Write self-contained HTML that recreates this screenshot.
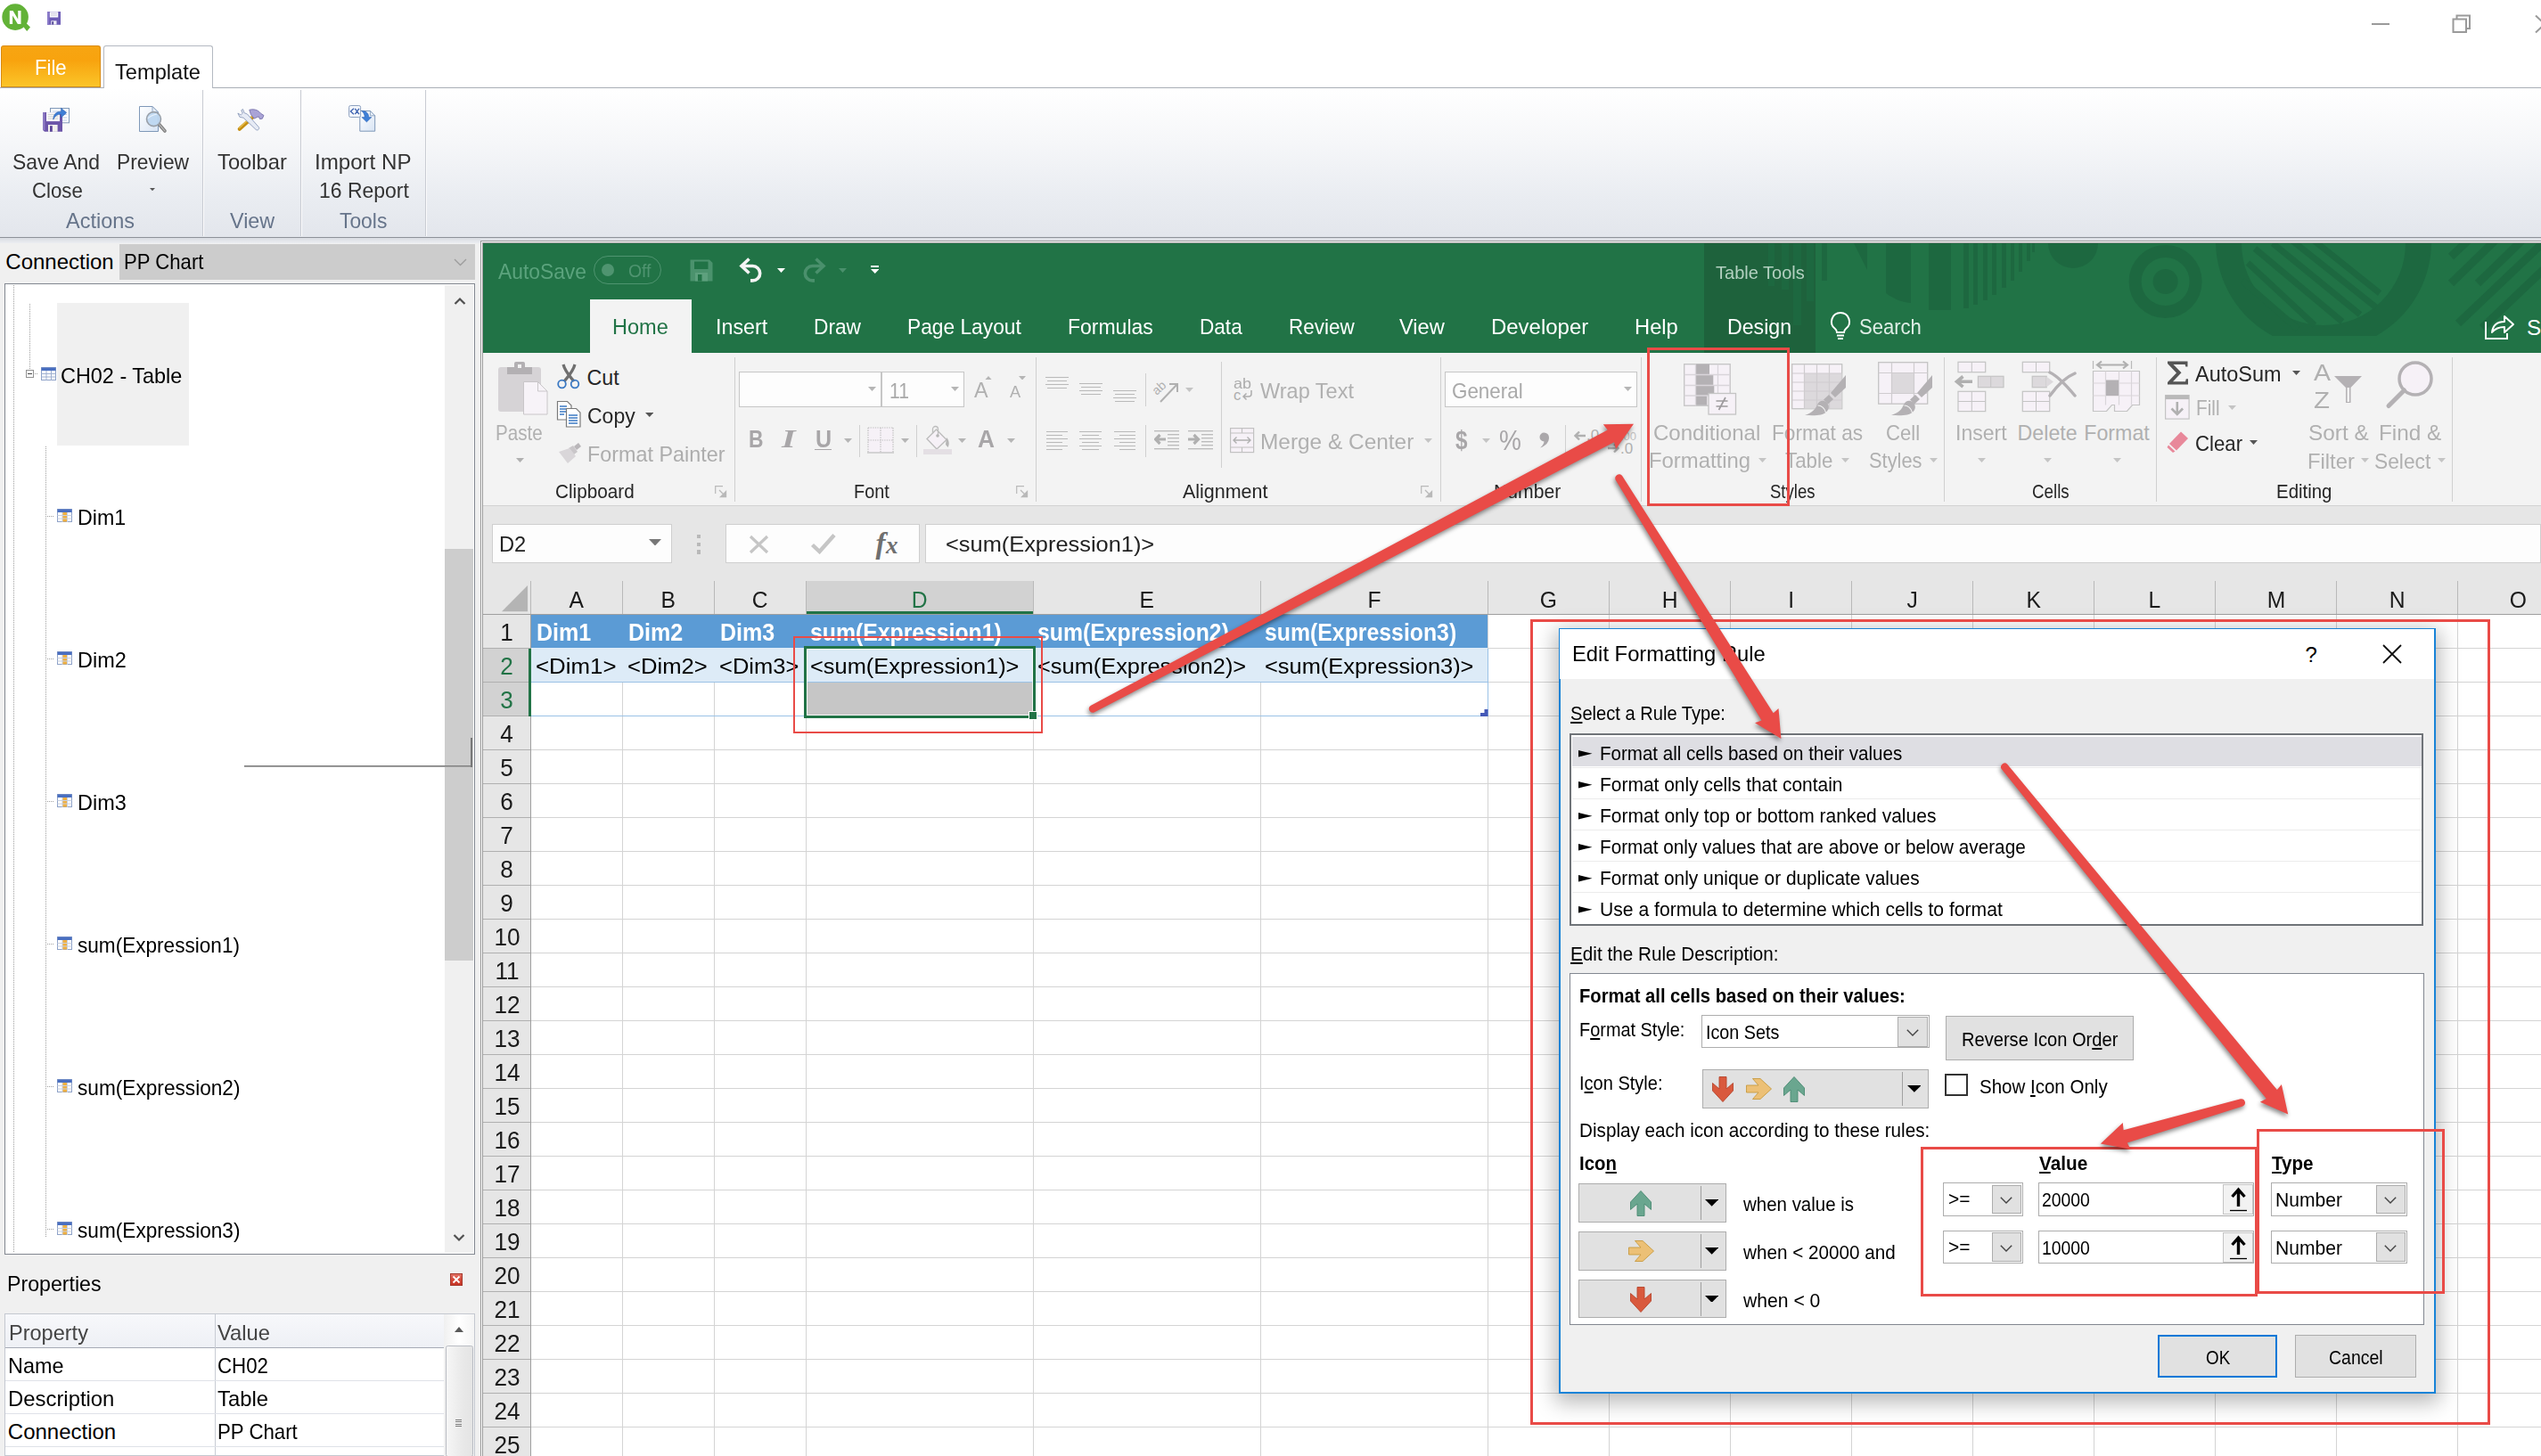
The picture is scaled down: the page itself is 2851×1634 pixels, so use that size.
<!DOCTYPE html>
<html><head><meta charset="utf-8"><title>NPrinting Template Editor</title>
<style>
html,body{margin:0;padding:0;background:#fff;}
body{width:2851px;height:1634px;overflow:hidden;position:relative;font-family:"Liberation Sans",sans-serif;}
#root{position:absolute;left:0;top:0;width:2851px;height:1634px;overflow:hidden;}
#root div,#root svg,#root span.t{position:absolute;box-sizing:border-box;}
span.t{white-space:pre;transform-origin:0 50%;display:block;}
u{text-decoration:underline;text-underline-offset:2px;text-decoration-thickness:1.5px;}
</style></head><body><div id="root">
<div style="left:0.0px;top:0.0px;width:2851.0px;height:98.0px;background:#fff;"></div>
<svg style="left:0.0px;top:0.0px;" width="40.0" height="40.0" viewBox="0 0 40 40"><circle cx="17.100" cy="19.100" r="14.800" fill="#62b237"/><path d="M25.200 28.800l3.600-3.600 5.200 5.300-3.800 4.600z" fill="#62b237"/>
<path d="M10.800 27V12.100h3.700l5.700 9.300v-9.300h3.300V27h-3.600l-5.800-9.500V27z" fill="#fff"/></svg>
<svg style="left:52.0px;top:12.0px;" width="18.0" height="18.0" viewBox="0 0 18 18"><rect x="1" y="1" width="15" height="14.800" fill="#6d5cb6"/><rect x="1" y="1" width="2.200" height="14.800" fill="#8a7bc9"/><rect x="3.800" y="1.300" width="9.400" height="6.200" fill="#fbfbfe"/><path d="M5 3.300h7M5 5.200h7" stroke="#b9b5cf" stroke-width=".7"/><rect x="5.300" y="11.300" width="6.200" height="4.300" fill="#eeeef6"/><rect x="6.300" y="12.200" width="1.800" height="3.400" fill="#4c3f91"/></svg>
<div style="left:2661.0px;top:26.0px;width:20.0px;height:2.2px;background:#9a9a9a;"></div>
<svg style="left:2750.0px;top:15.0px;" width="24.0" height="24.0" viewBox="0 0 24 24"><path d="M6.5 6.5V2.5H21V17H17" fill="none" stroke="#9a9a9a" stroke-width="2"/><rect x="2.5" y="6.5" width="14.5" height="14.5" fill="none" stroke="#9a9a9a" stroke-width="2"/></svg>
<svg style="left:2843.0px;top:15.0px;" width="12.0" height="24.0" viewBox="0 0 12 24"><path d="M2 2.5L22 21.5M2 21.5L22 2.5" stroke="#9a9a9a" stroke-width="2"/></svg>
<div style="left:0.0px;top:97.5px;width:2851.0px;height:1.5px;background:#a9aeb6;"></div>
<div style="left:1.0px;top:51.0px;width:112.0px;height:47.0px;background:linear-gradient(#f7a512 0%,#f8a30e 35%,#fbc529 100%);border:1px solid #d98a10;border-radius:3px 3px 0 0;border-bottom:1px solid #c98a20;"></div>
<span class="t" style="left:39.0px;top:64.30px;font-size:24.00px;line-height:24.00px;color:#fff;transform:scaleX(0.9205);">File</span>
<div style="left:116.0px;top:51.0px;width:122.5px;height:48.0px;background:#fff;border:1.5px solid #b4b9c1;border-radius:3px 3px 0 0;border-bottom:none;"></div>
<span class="t" style="left:129.0px;top:69.30px;font-size:24.00px;line-height:24.00px;color:#111;transform:scaleX(0.9858);">Template</span>
<div style="left:0.0px;top:99.0px;width:2851.0px;height:167.0px;background:linear-gradient(#ffffff 0%,#f6f7f9 35%,#e9ecf1 75%,#e3e6ec 100%);"></div>
<div style="left:0.0px;top:265.5px;width:2851.0px;height:1.5px;background:#8e9299;"></div>
<div style="left:0.0px;top:267.0px;width:2851.0px;height:6.0px;background:linear-gradient(#d9dce2,#eceef2);"></div>
<div style="left:226.5px;top:101.0px;width:1.2px;height:164.0px;background:#c9ccd3;"></div>
<div style="left:227.7px;top:101.0px;width:1.0px;height:164.0px;background:#fbfbfc;"></div>
<div style="left:337.0px;top:101.0px;width:1.2px;height:164.0px;background:#c9ccd3;"></div>
<div style="left:338.2px;top:101.0px;width:1.0px;height:164.0px;background:#fbfbfc;"></div>
<div style="left:476.5px;top:101.0px;width:1.2px;height:164.0px;background:#c9ccd3;"></div>
<div style="left:477.7px;top:101.0px;width:1.0px;height:164.0px;background:#fbfbfc;"></div>
<span class="t" style="left:14.4px;top:170.30px;font-size:24.00px;line-height:24.00px;color:#333;transform:scaleX(0.9547);">Save And</span>
<span class="t" style="left:35.5px;top:202.30px;font-size:24.00px;line-height:24.00px;color:#333;transform:scaleX(0.9257);">Close</span>
<span class="t" style="left:131.0px;top:170.30px;font-size:24.00px;line-height:24.00px;color:#333;transform:scaleX(0.9489);">Preview</span>
<span class="t" style="left:243.7px;top:170.30px;font-size:24.00px;line-height:24.00px;color:#333;transform:scaleX(0.9896);">Toolbar</span>
<span class="t" style="left:353.0px;top:170.30px;font-size:24.00px;line-height:24.00px;color:#333;transform:scaleX(1.0044);">Import NP</span>
<span class="t" style="left:357.7px;top:202.30px;font-size:24.00px;line-height:24.00px;color:#333;transform:scaleX(0.9573);">16 Report</span>
<span class="t" style="left:74.4px;top:236.30px;font-size:24.00px;line-height:24.00px;color:#66748a;transform:scaleX(0.9783);">Actions</span>
<span class="t" style="left:257.6px;top:236.30px;font-size:24.00px;line-height:24.00px;color:#66748a;transform:scaleX(0.9731);">View</span>
<span class="t" style="left:380.7px;top:236.30px;font-size:24.00px;line-height:24.00px;color:#66748a;transform:scaleX(0.9513);">Tools</span>
<svg style="left:168.3px;top:211.2px;" width="6.0" height="3.2" viewBox="0 0 6 3.2"><path d="M0 0H6L3.0 3.2Z" fill="#555"/></svg>
<svg style="left:44.0px;top:116.0px;" width="40.0" height="36.0" viewBox="0 0 40 36"><g transform="translate(-44,-116)">
<rect x="56.500" y="121.500" width="21" height="16.300" fill="#fff" stroke="#7f98b8" stroke-width="1"/><path d="M59 125h16M59 128.500h16M59 132h16M59 135h16" stroke="#b3c6e4" stroke-width=".9"/>
<path d="M48.200 126.100h21.800v21.700h-20l-1.800-1.800z" fill="#6c55a9"/><rect x="48.200" y="126.100" width="2.300" height="20" fill="#8d7bc4"/>
<rect x="52" y="126.100" width="15" height="10" fill="#fafafa"/><path d="M53.500 128.500h12M53.500 130.800h12M53.500 133.100h12" stroke="#c9c9c9" stroke-width=".8"/>
<rect x="54" y="140" width="10.600" height="7.800" fill="#f2f0ee"/><rect x="56" y="141.200" width="2.800" height="6.600" fill="#5a4598"/>
<path d="M59.800 134.200c0-6 3.500-9.200 8.800-9v-3.900l6 5.300-6 5.300v-3.500c-4-.3-6.800 1.500-8.800 5.800z" fill="#3f7fd6" stroke="#2b5fae" stroke-width=".6"/></g></svg>
<svg style="left:154.0px;top:117.0px;" width="36.0" height="34.0" viewBox="0 0 36 34"><g transform="translate(-154,-117)"><defs><linearGradient id="pg" x1="0" y1="0" x2="1" y2="1"><stop offset="0" stop-color="#fff"/><stop offset="1" stop-color="#d8e4f4"/></linearGradient></defs>
<path d="M156.500 119.500h14.500l6.500 6.500v21.500h-21z" fill="url(#pg)" stroke="#7f98b8" stroke-width="1"/><path d="M171 119.500v6.500h6.500z" fill="#e9f0fa" stroke="#7f98b8" stroke-width=".8"/>
<path d="M178.500 139.500l6.500 7.500" stroke="#7b7b7b" stroke-width="3.600" stroke-linecap="round"/><path d="M179 140l6 7" stroke="#b9b9b9" stroke-width="1.200" stroke-linecap="round"/>
<circle cx="172.500" cy="133.600" r="8" fill="#bcd6f0" fill-opacity=".92" stroke="#9aa0a8" stroke-width="1.600"/><path d="M166 133c2-3 6-4 10-5" stroke="#e8f2fc" stroke-width="1.200" fill="none"/></g></svg>
<svg style="left:262.0px;top:118.0px;" width="38.0" height="32.0" viewBox="0 0 38 32"><g transform="translate(-262,-118)">
<path d="M268.800 144.800L283.500 131.500" stroke="#c58f13" stroke-width="4.200" stroke-linecap="round"/><path d="M268.500 143.500L283 130.500" stroke="#e8bd4b" stroke-width="1.300" stroke-linecap="round"/>
<path d="M279.800 123.300c4.500-1.300 9.500-.3 12.800 4l3.400 2.200-1.700 3.700-2.800.4-1.300-2.800-5.200 2.300-3.600-4.800z" fill="#a9a3d6" stroke="#6f69a6" stroke-width=".8"/>
<path d="M272.500 122.500l1.600 4.200 3.300 1.300 12.800 14.500c1.600 2-1 4.600-3 3l-14-13.300-4.300-.9-2-4.300 3.300 2.100 2.100-2-1.600-3.300z" fill="#e6ebf5" stroke="#8c9bba" stroke-width=".9"/></g></svg>
<svg style="left:389.0px;top:116.0px;" width="36.0" height="36.0" viewBox="0 0 36 36"><g transform="translate(-389,-116)">
<path d="M403.800 124.500h11.600l5.300 5.300v17.400h-16.900z" fill="url(#pg)" stroke="#7f98b8" stroke-width="1"/><path d="M415.400 124.500v5.300h5.300z" fill="#e9f0fa" stroke="#7f98b8" stroke-width=".8"/>
<rect x="391.600" y="118.500" width="13" height="13" rx="1.800" fill="#f3f6fb" stroke="#8ea2c0" stroke-width="1"/>
<path d="M397 121.800l-3.600 3.200 3.600 3.200M398.300 121.800l4.600 6.400M402.900 121.800l-4.600 6.400" fill="none" stroke="#3d62b0" stroke-width="1.300"/>
<path d="M405.500 124.300c5.200 0 8.300 2.700 8.300 7.300h3.100l-5.500 5.300-5.500-5.300h3.200c0-3.200-1.200-5.300-3.600-7.300z" fill="#3f7fd6" stroke="#2b5fae" stroke-width=".5"/></g></svg>
<div style="left:0.0px;top:273.0px;width:541.0px;height:1361.0px;background:#f0f0f0;"></div>
<span class="t" style="left:6.3px;top:282.30px;font-size:24.00px;line-height:24.00px;color:#000;">Connection</span>
<div style="left:134.0px;top:274.0px;width:399.0px;height:40.0px;background:#cccccc;"></div>
<span class="t" style="left:138.5px;top:282.30px;font-size:24.00px;line-height:24.00px;color:#000;transform:scaleX(0.9222);">PP Chart</span>
<svg style="left:509.0px;top:290.0px;" width="16.0" height="10.0" viewBox="0 0 16 10"><path d="M1 1L7.500 7.500L14 1" fill="none" stroke="#9c9c9c" stroke-width="1.300"/></svg>
<div style="left:5.0px;top:318.0px;width:528.2px;height:1089.5px;background:#fff;border:1.5px solid #828790;"></div>
<div style="left:499.0px;top:320.0px;width:32.0px;height:1086.0px;background:#f0f0f0;"></div>
<div style="left:499.0px;top:616.0px;width:32.0px;height:462.0px;background:#cdcdcd;"></div>
<svg style="left:508.5px;top:333.0px;" width="14.0" height="10.0" viewBox="0 0 14 10"><path d="M1.5 8L7 2.5L12.5 8" fill="none" stroke="#505050" stroke-width="2.2"/></svg>
<svg style="left:508.0px;top:1384.0px;" width="14.0" height="10.0" viewBox="0 0 14 10"><path d="M1.5 2L7 7.5L12.5 2" fill="none" stroke="#505050" stroke-width="2.2"/></svg>
<div style="left:15.0px;top:320.0px;width:1.0px;height:1086.0px;background:repeating-linear-gradient(to bottom,#a0a0a0 0 1px,transparent 1px 2px);"></div>
<div style="left:33.0px;top:341.0px;width:1.0px;height:80.0px;background:repeating-linear-gradient(to bottom,#a0a0a0 0 1px,transparent 1px 2px);"></div>
<div style="left:51.0px;top:501.0px;width:1.0px;height:888.0px;background:repeating-linear-gradient(to bottom,#a0a0a0 0 1px,transparent 1px 2px);"></div>
<div style="left:64.0px;top:340.0px;width:148.0px;height:160.0px;background:#f0f0f0;"></div>
<div style="left:29.0px;top:415.0px;width:9.0px;height:9.0px;background:#fff;border:1px solid #919191;"></div>
<div style="left:31.0px;top:419.0px;width:5.0px;height:1.0px;background:#444;"></div>
<div style="left:39.0px;top:419.0px;width:4.0px;height:1.0px;background:repeating-linear-gradient(to right,#a0a0a0 0 1px,transparent 1px 2px);"></div>
<svg style="left:46.0px;top:412.0px;" width="17.0" height="15.0" viewBox="0 0 17 15"><rect x=".5" y=".5" width="16" height="14" fill="#fff" stroke="#8ea2c8"/><rect x=".5" y=".5" width="16" height="3.5" fill="#4a6fc0"/><path d="M.5 7.5h16M.5 11h16M6 4v11M11.5 4v11" stroke="#9fb0d0" stroke-width="1"/></svg>
<span class="t" style="left:68.3px;top:410.30px;font-size:24.00px;line-height:24.00px;color:#000;transform:scaleX(0.9761);">CH02 - Table</span>
<div style="left:53.0px;top:579.4px;width:8.0px;height:1.0px;background:repeating-linear-gradient(to right,#a0a0a0 0 1px,transparent 1px 2px);"></div>
<svg style="left:64.0px;top:571.4px;" width="17.0" height="15.0" viewBox="0 0 17 15"><rect x=".5" y=".5" width="16" height="14" fill="#fff" stroke="#8ea2c8"/><rect x=".5" y=".5" width="16" height="3.5" fill="#4a6fc0"/><rect x="6" y="4" width="5.5" height="10.5" fill="#f0b040"/><path d="M.5 7.5h16M.5 11h16M6 4v11M11.5 4v11" stroke="#c8d0e0" stroke-width="1"/></svg>
<span class="t" style="left:87.0px;top:569.30px;font-size:24.00px;line-height:24.00px;color:#000;transform:scaleX(0.9677);">Dim1</span>
<div style="left:53.0px;top:739.4px;width:8.0px;height:1.0px;background:repeating-linear-gradient(to right,#a0a0a0 0 1px,transparent 1px 2px);"></div>
<svg style="left:64.0px;top:731.4px;" width="17.0" height="15.0" viewBox="0 0 17 15"><rect x=".5" y=".5" width="16" height="14" fill="#fff" stroke="#8ea2c8"/><rect x=".5" y=".5" width="16" height="3.5" fill="#4a6fc0"/><rect x="6" y="4" width="5.5" height="10.5" fill="#f0b040"/><path d="M.5 7.5h16M.5 11h16M6 4v11M11.5 4v11" stroke="#c8d0e0" stroke-width="1"/></svg>
<span class="t" style="left:87.0px;top:729.30px;font-size:24.00px;line-height:24.00px;color:#000;transform:scaleX(0.9785);">Dim2</span>
<div style="left:53.0px;top:899.4px;width:8.0px;height:1.0px;background:repeating-linear-gradient(to right,#a0a0a0 0 1px,transparent 1px 2px);"></div>
<svg style="left:64.0px;top:891.4px;" width="17.0" height="15.0" viewBox="0 0 17 15"><rect x=".5" y=".5" width="16" height="14" fill="#fff" stroke="#8ea2c8"/><rect x=".5" y=".5" width="16" height="3.5" fill="#4a6fc0"/><rect x="6" y="4" width="5.5" height="10.5" fill="#f0b040"/><path d="M.5 7.5h16M.5 11h16M6 4v11M11.5 4v11" stroke="#c8d0e0" stroke-width="1"/></svg>
<span class="t" style="left:87.0px;top:889.30px;font-size:24.00px;line-height:24.00px;color:#000;transform:scaleX(0.9785);">Dim3</span>
<div style="left:53.0px;top:1059.4px;width:8.0px;height:1.0px;background:repeating-linear-gradient(to right,#a0a0a0 0 1px,transparent 1px 2px);"></div>
<svg style="left:64.0px;top:1051.4px;" width="17.0" height="15.0" viewBox="0 0 17 15"><rect x=".5" y=".5" width="16" height="14" fill="#fff" stroke="#8ea2c8"/><rect x=".5" y=".5" width="16" height="3.5" fill="#4a6fc0"/><rect x="6" y="4" width="5.5" height="10.5" fill="#f0b040"/><path d="M.5 7.5h16M.5 11h16M6 4v11M11.5 4v11" stroke="#c8d0e0" stroke-width="1"/></svg>
<span class="t" style="left:87.0px;top:1049.30px;font-size:24.00px;line-height:24.00px;color:#000;transform:scaleX(0.9410);">sum(Expression1)</span>
<div style="left:53.0px;top:1219.4px;width:8.0px;height:1.0px;background:repeating-linear-gradient(to right,#a0a0a0 0 1px,transparent 1px 2px);"></div>
<svg style="left:64.0px;top:1211.4px;" width="17.0" height="15.0" viewBox="0 0 17 15"><rect x=".5" y=".5" width="16" height="14" fill="#fff" stroke="#8ea2c8"/><rect x=".5" y=".5" width="16" height="3.5" fill="#4a6fc0"/><rect x="6" y="4" width="5.5" height="10.5" fill="#f0b040"/><path d="M.5 7.5h16M.5 11h16M6 4v11M11.5 4v11" stroke="#c8d0e0" stroke-width="1"/></svg>
<span class="t" style="left:87.0px;top:1209.30px;font-size:24.00px;line-height:24.00px;color:#000;transform:scaleX(0.9436);">sum(Expression2)</span>
<div style="left:53.0px;top:1379.4px;width:8.0px;height:1.0px;background:repeating-linear-gradient(to right,#a0a0a0 0 1px,transparent 1px 2px);"></div>
<svg style="left:64.0px;top:1371.4px;" width="17.0" height="15.0" viewBox="0 0 17 15"><rect x=".5" y=".5" width="16" height="14" fill="#fff" stroke="#8ea2c8"/><rect x=".5" y=".5" width="16" height="3.5" fill="#4a6fc0"/><rect x="6" y="4" width="5.5" height="10.5" fill="#f0b040"/><path d="M.5 7.5h16M.5 11h16M6 4v11M11.5 4v11" stroke="#c8d0e0" stroke-width="1"/></svg>
<span class="t" style="left:87.0px;top:1369.30px;font-size:24.00px;line-height:24.00px;color:#000;transform:scaleX(0.9436);">sum(Expression3)</span>
<div style="left:274.0px;top:859.0px;width:255.0px;height:2.0px;background:linear-gradient(#6e6e6e,#b8b8b8);"></div>
<div style="left:528.0px;top:828.0px;width:1.5px;height:33.0px;background:#777;"></div>
<span class="t" style="left:7.5px;top:1429.30px;font-size:24.00px;line-height:24.00px;color:#000;transform:scaleX(0.9645);">Properties</span>
<svg style="left:505.0px;top:1429.0px;" width="14.0" height="14.0" viewBox="0 0 14 14"><defs><linearGradient id="rx" x1="0" y1="0" x2="0" y2="1"><stop offset="0" stop-color="#e4776a"/><stop offset=".5" stop-color="#d64a3b"/><stop offset="1" stop-color="#c43325"/></linearGradient></defs><rect x=".5" y=".5" width="13" height="13" fill="url(#rx)" stroke="#a5382c"/><path d="M3.5 3.5l7 7M10.5 3.5l-7 7" stroke="#fff" stroke-width="1.8"/></svg>
<div style="left:5.0px;top:1474.0px;width:528.0px;height:160.0px;background:#fff;border:1px solid #c4c8d0;"></div>
<div style="left:6.0px;top:1475.0px;width:492.0px;height:37.0px;background:linear-gradient(#f7f8fb,#eef0f5);"></div>
<div style="left:6.0px;top:1511.5px;width:492.0px;height:1.5px;background:#a6abb5;"></div>
<div style="left:498.0px;top:1475.0px;width:34.0px;height:159.0px;background:linear-gradient(to right,#f0f0f0,#ffffff 50%,#f4f4f4);"></div>
<div style="left:499.5px;top:1509.5px;width:31.0px;height:125.0px;background:linear-gradient(to right,#f6f6f6,#e9e9e9 60%,#e4e4e4);border:1px solid #b9bcc3;border-radius:2.5px;"></div>
<svg style="left:510.0px;top:1489.0px;" width="10.0" height="6.0" viewBox="0 0 10 6"><path d="M0 6L5 0L10 6Z" fill="#5a5a5a"/></svg>
<div style="left:510.8px;top:1593.0px;width:7.4px;height:1.0px;background:#7d7d7d;"></div>
<div style="left:510.8px;top:1595.4px;width:7.4px;height:1.0px;background:#7d7d7d;"></div>
<div style="left:510.8px;top:1597.8px;width:7.4px;height:1.0px;background:#7d7d7d;"></div>
<div style="left:510.8px;top:1600.2px;width:7.4px;height:1.0px;background:#7d7d7d;"></div>
<div style="left:241.0px;top:1475.0px;width:1.0px;height:159.0px;background:#c8ccd4;"></div>
<div style="left:6.0px;top:1549.0px;width:492.0px;height:1.0px;background:#dfe2e8;"></div>
<div style="left:6.0px;top:1586.0px;width:492.0px;height:1.0px;background:#dfe2e8;"></div>
<div style="left:6.0px;top:1623.0px;width:492.0px;height:1.0px;background:#dfe2e8;"></div>
<span class="t" style="left:9.5px;top:1484.30px;font-size:24.00px;line-height:24.00px;color:#444;transform:scaleX(0.9801);">Property</span>
<span class="t" style="left:244.0px;top:1484.30px;font-size:24.00px;line-height:24.00px;color:#444;transform:scaleX(0.9899);">Value</span>
<span class="t" style="left:8.8px;top:1521.30px;font-size:24.00px;line-height:24.00px;color:#000;transform:scaleX(0.9747);">Name</span>
<span class="t" style="left:244.2px;top:1521.30px;font-size:24.00px;line-height:24.00px;color:#000;transform:scaleX(0.9289);">CH02</span>
<span class="t" style="left:8.8px;top:1558.30px;font-size:24.00px;line-height:24.00px;color:#000;transform:scaleX(0.9946);">Description</span>
<span class="t" style="left:244.2px;top:1558.30px;font-size:24.00px;line-height:24.00px;color:#000;transform:scaleX(0.9934);">Table</span>
<span class="t" style="left:8.8px;top:1595.30px;font-size:24.00px;line-height:24.00px;color:#000;">Connection</span>
<span class="t" style="left:244.2px;top:1595.30px;font-size:24.00px;line-height:24.00px;color:#000;transform:scaleX(0.9263);">PP Chart</span>
<div style="left:539.0px;top:270.0px;width:2313.0px;height:1365.0px;background:#fff;border:1px solid #9a9a9a;"></div>
<div style="left:541.0px;top:272.0px;width:2311.0px;height:1363.0px;background:#fff;border:1px solid #9a9a9a;"></div>
<div style="left:542.0px;top:273.0px;width:2309.0px;height:123.0px;background:#217346;"></div>
<div style="left:1912.0px;top:273.0px;width:125.0px;height:123.0px;background:#1e623c;"></div>
<svg style="left:1900.0px;top:273.0px;" width="951.0" height="123.0" viewBox="0 0 951 123"><g fill="#1d6840">
<rect x="84" y="0" width="7" height="48"/><rect x="99" y="0" width="8" height="52"/><rect x="112" y="0" width="9" height="92"/><rect x="127" y="0" width="8" height="65"/>
<rect x="144" y="0" width="6" height="42"/>
<path d="M180 0h15v30z"/>
<path d="M216 0h28v67c-11-1-20-5-28-11z"/>
<rect x="264" y="0" width="25" height="75"/>
<rect x="303" y="0" width="6" height="73"/><rect x="314" y="0" width="5" height="69"/><rect x="325" y="0" width="5" height="64"/><rect x="335" y="0" width="5" height="58"/><rect x="346" y="0" width="5" height="50"/><rect x="356" y="0" width="4" height="42"/><rect x="365" y="0" width="4" height="32"/><rect x="374" y="0" width="4" height="20"/><rect x="380" y="0" width="3" height="10"/>
<path d="M398 0a28 28 0 0 0 56 0z"/>
</g>
<circle cx="529.6" cy="43" r="34" fill="none" stroke="#1d6840" stroke-width="14"/><circle cx="529.6" cy="43" r="14" fill="#1d6840"/>
<path d="M586 0 A121 121 0 0 0 650 104 H766 A121 121 0 0 0 828 0 H799 A92 92 0 0 1 615 0Z" fill="#1d6840"/>
<g stroke="#1d6840" stroke-width="7" fill="none"><path d="M622 22l75 70M616 42l62 54M630 6l98 82M650 0l98 80M668 -6l98 78M690 -8l80 64"/></g>
<g stroke="#1d6840" stroke-width="9" fill="none"><path d="M850 15l40-38M850 45l70-68M880 45l70-68M858 90l100-95M885 95l80-76"/></g>
</svg>
<span class="t" style="left:558.8px;top:294.30px;font-size:23.20px;line-height:23.20px;color:#5ba37d;transform:scaleX(0.9840);">AutoSave</span>
<div style="left:666.4px;top:287.4px;width:75.6px;height:31.2px;border:1.3px solid #4f9470;border-radius:16px;"></div>
<div style="left:675.0px;top:296.3px;width:14.0px;height:14.0px;background:#4f9470;border-radius:50%;"></div>
<span class="t" style="left:704.5px;top:295.30px;font-size:19.50px;line-height:19.50px;color:#4f9470;transform:scaleX(0.9941);">Off</span>
<svg style="left:773.7px;top:291.0px;" width="26.0" height="25.0" viewBox="0 0 26 25"><path d="M.5 .5h21.500l3.500 3.500v20.500H.5z" fill="#4b926d"/><rect x="5" y="2.500" width="15.500" height="8.500" fill="#217346"/><rect x="6" y="15" width="14" height="9.500" fill="#5da07d"/><rect x="9" y="17" width="4.500" height="7.500" fill="#217346"/></svg>
<svg style="left:828.0px;top:288.0px;" width="30.0" height="30.0" viewBox="0 0 30 30"><path d="M12.500 2.500L4 10.500l8.500 8" fill="none" stroke="#f4f4f4" stroke-width="3.600"/><path d="M4 10.500h12.500a8.200 8.200 0 0 1 0 16.400h-2.500" fill="none" stroke="#f4f4f4" stroke-width="3.600"/></svg>
<svg style="left:871.5px;top:301.1px;" width="9.0" height="5.0" viewBox="0 0 9 5"><path d="M0 0H9L4.5 5Z" fill="#fff"/></svg>
<svg style="left:898.0px;top:288.0px;" width="30.0" height="30.0" viewBox="0 0 30 30"><path d="M17.500 2.500l8.500 8-8.500 8" fill="none" stroke="#4a906c" stroke-width="3.600"/><path d="M26 10.500H13.500a8.200 8.200 0 0 0 0 16.400h2.500" fill="none" stroke="#4a906c" stroke-width="3.600"/></svg>
<svg style="left:940.8px;top:301.1px;" width="9.0" height="5.0" viewBox="0 0 9 5"><path d="M0 0H9L4.5 5Z" fill="#4a906c"/></svg>
<div style="left:976.8px;top:298.0px;width:9.5px;height:1.6px;background:#fff;"></div>
<svg style="left:976.8px;top:302.0px;" width="9.5" height="5.0" viewBox="0 0 9.5 5"><path d="M0 0H9.5L4.75 5Z" fill="#fff"/></svg>
<div style="left:662.0px;top:336.0px;width:114.0px;height:60.0px;background:#f3f3f3;"></div>
<span class="t" style="left:687.2px;top:355.30px;font-size:24.30px;line-height:24.30px;color:#217346;transform:scaleX(0.9688);">Home</span>
<span class="t" style="left:802.6px;top:355.30px;font-size:24.30px;line-height:24.30px;color:#fff;transform:scaleX(0.9576);">Insert</span>
<span class="t" style="left:913.0px;top:355.30px;font-size:24.30px;line-height:24.30px;color:#fff;transform:scaleX(0.9346);">Draw</span>
<span class="t" style="left:1018.0px;top:355.30px;font-size:24.30px;line-height:24.30px;color:#fff;transform:scaleX(0.9365);">Page Layout</span>
<span class="t" style="left:1197.6px;top:355.30px;font-size:24.30px;line-height:24.30px;color:#fff;transform:scaleX(0.9459);">Formulas</span>
<span class="t" style="left:1346.0px;top:355.30px;font-size:24.30px;line-height:24.30px;color:#fff;transform:scaleX(0.9293);">Data</span>
<span class="t" style="left:1445.6px;top:355.30px;font-size:24.30px;line-height:24.30px;color:#fff;transform:scaleX(0.9237);">Review</span>
<span class="t" style="left:1570.2px;top:355.30px;font-size:24.30px;line-height:24.30px;color:#fff;transform:scaleX(0.9726);">View</span>
<span class="t" style="left:1673.0px;top:355.30px;font-size:24.30px;line-height:24.30px;color:#fff;transform:scaleX(0.9859);">Developer</span>
<span class="t" style="left:1834.0px;top:355.30px;font-size:24.30px;line-height:24.30px;color:#fff;transform:scaleX(0.9764);">Help</span>
<span class="t" style="left:1937.9px;top:355.30px;font-size:24.30px;line-height:24.30px;color:#fff;transform:scaleX(0.9532);">Design</span>
<span class="t" style="left:2085.5px;top:355.30px;font-size:24.30px;line-height:24.30px;color:#dfeee6;transform:scaleX(0.9078);">Search</span>
<span class="t" style="left:1924.6px;top:296.30px;font-size:20.80px;line-height:20.80px;color:#b3d0c0;transform:scaleX(0.9625);">Table Tools</span>
<svg style="left:2052.0px;top:349.0px;" width="26.0" height="34.0" viewBox="0 0 26 34"><path d="M13 2a10 10 0 0 0-6 18c1.5 1.2 2 2.500 2 4h8c0-1.500.5-2.800 2-4A10 10 0 0 0 13 2z" fill="none" stroke="#fff" stroke-width="2"/><path d="M9 27.500h8M10 31h6" stroke="#fff" stroke-width="2"/></svg>
<svg style="left:2786.0px;top:351.0px;" width="36.0" height="32.0" viewBox="0 0 36 32"><path d="M3 10v19h24v-6" fill="none" stroke="#fff" stroke-width="2"/><path d="M10 22c1-8 6-12 14-12V4l10 9-10 9v-6c-6 0-10 1-14 6z" fill="none" stroke="#fff" stroke-width="2" stroke-linejoin="round"/></svg>
<span class="t" style="left:2835.0px;top:356.30px;font-size:24.30px;line-height:24.30px;color:#fff;">Sh</span>
<div style="left:542.0px;top:396.0px;width:2309.0px;height:171.0px;background:#f3f3f3;"></div>
<div style="left:542.0px;top:566.5px;width:2309.0px;height:1.3px;background:#d2d2d2;"></div>
<div style="left:823.9px;top:400.7px;width:1.2px;height:162.3px;background:#d0d0d0;"></div>
<div style="left:1162.0px;top:400.7px;width:1.2px;height:162.3px;background:#d0d0d0;"></div>
<div style="left:1615.9px;top:400.7px;width:1.2px;height:162.3px;background:#d0d0d0;"></div>
<div style="left:1841.1px;top:400.7px;width:1.2px;height:162.3px;background:#d0d0d0;"></div>
<div style="left:2180.9px;top:400.7px;width:1.2px;height:162.3px;background:#d0d0d0;"></div>
<div style="left:2418.8px;top:400.7px;width:1.2px;height:162.3px;background:#d0d0d0;"></div>
<div style="left:2750.7px;top:400.7px;width:1.2px;height:162.3px;background:#d0d0d0;"></div>
<svg style="left:802.0px;top:545.0px;" width="14.0" height="14.0" viewBox="0 0 14 14"><path d="M.7 9V.7H9" fill="none" stroke="#b9b9b9" stroke-width="1.2"/><path d="M5 5l7 7M12.500 6.500v6h-6z" stroke="#b9b9b9" stroke-width="1.3" fill="#b9b9b9"/></svg>
<svg style="left:1140.0px;top:545.0px;" width="14.0" height="14.0" viewBox="0 0 14 14"><path d="M.7 9V.7H9" fill="none" stroke="#b9b9b9" stroke-width="1.2"/><path d="M5 5l7 7M12.500 6.500v6h-6z" stroke="#b9b9b9" stroke-width="1.3" fill="#b9b9b9"/></svg>
<svg style="left:1594.0px;top:545.0px;" width="14.0" height="14.0" viewBox="0 0 14 14"><path d="M.7 9V.7H9" fill="none" stroke="#b9b9b9" stroke-width="1.2"/><path d="M5 5l7 7M12.500 6.500v6h-6z" stroke="#b9b9b9" stroke-width="1.3" fill="#b9b9b9"/></svg>
<span class="t" style="left:623.0px;top:541.30px;font-size:22.40px;line-height:22.40px;color:#262626;transform:scaleX(0.9251);">Clipboard</span>
<span class="t" style="left:958.0px;top:541.30px;font-size:22.40px;line-height:22.40px;color:#262626;transform:scaleX(0.8879);">Font</span>
<span class="t" style="left:1326.5px;top:541.30px;font-size:22.40px;line-height:22.40px;color:#262626;transform:scaleX(0.9587);">Alignment</span>
<span class="t" style="left:1675.7px;top:541.30px;font-size:22.40px;line-height:22.40px;color:#262626;transform:scaleX(0.9451);">Number</span>
<span class="t" style="left:1985.7px;top:541.30px;font-size:22.40px;line-height:22.40px;color:#262626;transform:scaleX(0.8279);">Styles</span>
<span class="t" style="left:2279.6px;top:541.30px;font-size:22.40px;line-height:22.40px;color:#262626;transform:scaleX(0.8375);">Cells</span>
<span class="t" style="left:2554.0px;top:541.30px;font-size:22.40px;line-height:22.40px;color:#262626;transform:scaleX(0.9125);">Editing</span>
<svg style="left:557.0px;top:404.0px;" width="60.0" height="64.0" viewBox="0 0 60 64"><rect x="2" y="8" width="48" height="50" rx="3" fill="#d6d3d6"/><path d="M12 8h28v8H12z" fill="#b3b0b3"/><path d="M20 8v-4a2 2 0 0 1 2-2h8a2 2 0 0 1 2 2v4z" fill="#b3b0b3"/><rect x="24" y="5" width="4" height="4" fill="#f3f3f3"/>
<path d="M30.500 24.500h16l10.500 10.500v26h-26.500z" fill="#f7f3f8" stroke="#c9c6c9" stroke-width="1"/><path d="M46.500 24.500v10.500h10.500" fill="none" stroke="#c9c6c9"/></svg>
<span class="t" style="left:556.3px;top:475.30px;font-size:23.20px;line-height:23.20px;color:#b0b0b0;transform:scaleX(0.8883);">Paste</span>
<svg style="left:579.0px;top:513.5px;" width="9.0" height="5.0" viewBox="0 0 9 5"><path d="M0 0H9L4.5 5Z" fill="#b0b0b0"/></svg>
<svg style="left:624.0px;top:407.0px;" width="30.0" height="31.0" viewBox="0 0 30 31"><path d="M8 2c2 8 8 14 12 19M21 2c-2 8-8 14-12 19" stroke="#6f6f6f" stroke-width="3.200" fill="none"/><circle cx="6.500" cy="24" r="4.300" fill="none" stroke="#3b79c3" stroke-width="1.800"/><circle cx="21" cy="24" r="4.300" fill="none" stroke="#3b79c3" stroke-width="1.800"/></svg>
<span class="t" style="left:658.6px;top:413.30px;font-size:23.20px;line-height:23.20px;color:#262626;">Cut</span>
<svg style="left:624.0px;top:449.0px;" width="30.0" height="32.0" viewBox="0 0 30 32"><path d="M1.500 1.500h11l4.500 4.500v16h-15.500z" fill="#fff" stroke="#7a7a7a" stroke-width="1.200"/><path d="M4 7h8M4 10h8M4 13h8M4 16h5" stroke="#3b79c3" stroke-width="1.300"/>
<path d="M11.500 9.500h11l4.500 4.500v16h-15.500z" fill="#fff" stroke="#7a7a7a" stroke-width="1.200"/><path d="M14 17h10M14 20h10M14 23h10M14 26h10" stroke="#3b79c3" stroke-width="1.300"/></svg>
<span class="t" style="left:658.6px;top:456.30px;font-size:23.20px;line-height:23.20px;color:#262626;transform:scaleX(0.9915);">Copy</span>
<svg style="left:723.6px;top:462.5px;" width="9.5" height="5.0" viewBox="0 0 9.5 5"><path d="M0 0H9.5L4.75 5Z" fill="#555"/></svg>
<svg style="left:625.0px;top:496.0px;" width="28.0" height="24.0" viewBox="0 0 28 24"><path d="M19 5l5-4 3 4-5 4z" fill="#b9b6b9"/><path d="M13 7l5-3 5 7-4 3z" fill="#c9c6c9"/><path d="M2 11l12-4 7 9-9 8z" fill="#d9d6d9"/></svg>
<span class="t" style="left:659.0px;top:499.30px;font-size:23.20px;line-height:23.20px;color:#adadad;transform:scaleX(1.0070);">Format Painter</span>
<div style="left:829.2px;top:417.2px;width:159.6px;height:39.4px;background:#fdfdfd;border:1.2px solid #c6c6c6;"></div>
<div style="left:988.6px;top:417.2px;width:93.4px;height:39.4px;background:#fdfdfd;border:1.2px solid #c6c6c6;"></div>
<svg style="left:973.9px;top:433.9px;" width="9.0" height="5.0" viewBox="0 0 9 5"><path d="M0 0H9L4.5 5Z" fill="#b5b5b5"/></svg>
<svg style="left:1067.0px;top:433.9px;" width="9.0" height="5.0" viewBox="0 0 9 5"><path d="M0 0H9L4.5 5Z" fill="#b5b5b5"/></svg>
<span class="t" style="left:997.8px;top:428.30px;font-size:23.20px;line-height:23.20px;color:#a9a9a9;transform:scaleX(0.9135);">11</span>
<span class="t" style="left:1092.7px;top:426.30px;font-size:24.00px;line-height:24.00px;color:#b0b0b0;transform:scaleX(0.9745);">A</span>
<svg style="left:1105.0px;top:421.5px;" width="8.0" height="4.5" viewBox="0 0 8 4.5"><path d="M0 4.500L4 0l4 4.500z" fill="#b5b5b5"/></svg>
<span class="t" style="left:1133.0px;top:431.30px;font-size:18.00px;line-height:18.00px;color:#b0b0b0;transform:scaleX(1.0161);">A</span>
<svg style="left:1142.6px;top:421.6px;" width="8.0" height="4.5" viewBox="0 0 8 4.5"><path d="M0 0H8L4.0 4.5Z" fill="#b5b5b5"/></svg>
<span class="t" style="left:839.6px;top:478.30px;font-size:28.50px;line-height:28.50px;color:#a8a6a8;font-weight:bold;transform:scaleX(0.8017);">B</span>
<span class="t" style="left:877.4px;top:478.30px;font-size:29.00px;line-height:29.00px;color:#a8a6a8;font-weight:bold;font-style:italic;font-family:'Liberation Serif',serif;transform:scaleX(1.3824);">I</span>
<span class="t" style="left:914.5px;top:478.30px;font-size:28.50px;line-height:28.50px;color:#a8a6a8;font-weight:bold;transform:scaleX(0.8794);">U</span>
<div style="left:914.0px;top:503.6px;width:19.0px;height:1.6px;background:#a8a6a8;"></div>
<svg style="left:947.0px;top:491.7px;" width="9.0" height="5.0" viewBox="0 0 9 5"><path d="M0 0H9L4.5 5Z" fill="#b5b5b5"/></svg>
<div style="left:963.9px;top:476.5px;width:1.2px;height:36.1px;background:#d0d0d0;"></div>
<svg style="left:972.5px;top:478.5px;" width="31.0" height="31.0" viewBox="0 0 31 31"><rect x="1" y="1" width="28" height="28" fill="#f6f1f7"/><path d="M1 1h28M1 1v28M29 1v28M15 1v28M1 15h28" stroke="#bdbdbd" stroke-width="1.200" stroke-dasharray="1.300 1.300" fill="none"/><path d="M0 29h30" stroke="#c4c4c4" stroke-width="1.400"/></svg>
<svg style="left:1011.0px;top:491.7px;" width="9.0" height="5.0" viewBox="0 0 9 5"><path d="M0 0H9L4.5 5Z" fill="#b5b5b5"/></svg>
<div style="left:1028.0px;top:476.5px;width:1.2px;height:36.1px;background:#d0d0d0;"></div>
<svg style="left:1035.0px;top:477.0px;" width="36.0" height="34.0" viewBox="0 0 36 34"><path d="M5 15.500L15.500 5l11.500 11.500L16 27z" fill="#f6f1f7" stroke="#bdbdbd" stroke-width="1.400"/><path d="M11.500 9.500V4.500a3 3 0 0 1 6 0v7" fill="none" stroke="#bdbdbd" stroke-width="1.300"/><circle cx="17" cy="12" r="1.800" fill="#b5b5b5"/><path d="M27 14c3 3 3.500 8 1.500 11l-2.500-3z" fill="#b5b5b5"/><rect x="1" y="27" width="32" height="6" fill="#e4dfe4"/></svg>
<svg style="left:1074.8px;top:491.7px;" width="9.0" height="5.0" viewBox="0 0 9 5"><path d="M0 0H9L4.5 5Z" fill="#b5b5b5"/></svg>
<span class="t" style="left:1097.0px;top:478.30px;font-size:28.50px;line-height:28.50px;color:#a8a6a8;font-weight:bold;transform:scaleX(0.9231);">A</span>
<svg style="left:1130.0px;top:491.7px;" width="9.0" height="5.0" viewBox="0 0 9 5"><path d="M0 0H9L4.5 5Z" fill="#b5b5b5"/></svg>
<div style="left:1173.0px;top:422.7px;width:26.0px;height:1.3px;background:#b9b9b9;"></div>
<div style="left:1175.0px;top:426.8px;width:22.0px;height:1.3px;background:#b9b9b9;"></div>
<div style="left:1173.0px;top:430.8px;width:26.0px;height:1.3px;background:#b9b9b9;"></div>
<div style="left:1175.0px;top:434.9px;width:22.0px;height:1.3px;background:#b9b9b9;"></div>
<div style="left:1211.0px;top:429.5px;width:26.0px;height:1.3px;background:#b9b9b9;"></div>
<div style="left:1213.0px;top:433.6px;width:22.0px;height:1.3px;background:#b9b9b9;"></div>
<div style="left:1211.0px;top:437.6px;width:26.0px;height:1.3px;background:#b9b9b9;"></div>
<div style="left:1213.0px;top:441.7px;width:22.0px;height:1.3px;background:#b9b9b9;"></div>
<div style="left:1249.0px;top:437.6px;width:26.0px;height:1.3px;background:#b9b9b9;"></div>
<div style="left:1251.0px;top:441.7px;width:22.0px;height:1.3px;background:#b9b9b9;"></div>
<div style="left:1249.0px;top:445.7px;width:26.0px;height:1.3px;background:#b9b9b9;"></div>
<div style="left:1251.0px;top:449.8px;width:22.0px;height:1.3px;background:#b9b9b9;"></div>
<div style="left:1284.8px;top:419.4px;width:1.2px;height:36.2px;background:#d0d0d0;"></div>
<svg style="left:1293.0px;top:423.0px;" width="32.0" height="30.0" viewBox="0 0 32 30"><path d="M9 28L28 8M19 8h9v9" fill="none" stroke="#b0b0b0" stroke-width="2"/><text x="1" y="17" font-size="14" fill="#b0b0b0" font-family="Liberation Sans" transform="rotate(-42 8 14)">ab</text></svg>
<svg style="left:1330.0px;top:434.5px;" width="9.0" height="5.0" viewBox="0 0 9 5"><path d="M0 0H9L4.5 5Z" fill="#c4c4c4"/></svg>
<div style="left:1369.9px;top:406.3px;width:1.2px;height:118.3px;background:#d0d0d0;"></div>
<span class="t" style="left:1384.0px;top:422.30px;font-size:16.50px;line-height:16.50px;color:#adadad;transform:scaleX(1.0897);">ab</span>
<span class="t" style="left:1384.0px;top:435.30px;font-size:16.50px;line-height:16.50px;color:#adadad;">c</span>
<svg style="left:1393.0px;top:438.0px;" width="12.0" height="12.0" viewBox="0 0 12 12"><path d="M11 0v4a3 3 0 0 1-3 3H2M5.500 3.500L2 7l3.500 3.500" fill="none" stroke="#adadad" stroke-width="1.500"/></svg>
<span class="t" style="left:1413.6px;top:428.30px;font-size:23.20px;line-height:23.20px;color:#b0b0b0;transform:scaleX(1.0136);">Wrap Text</span>
<div style="left:1174.0px;top:483.7px;width:24.0px;height:1.3px;background:#b9b9b9;"></div>
<div style="left:1174.0px;top:487.7px;width:17.8px;height:1.3px;background:#b9b9b9;"></div>
<div style="left:1174.0px;top:491.8px;width:24.0px;height:1.3px;background:#b9b9b9;"></div>
<div style="left:1174.0px;top:495.8px;width:17.8px;height:1.3px;background:#b9b9b9;"></div>
<div style="left:1174.0px;top:499.8px;width:24.0px;height:1.3px;background:#b9b9b9;"></div>
<div style="left:1174.0px;top:503.8px;width:17.8px;height:1.3px;background:#b9b9b9;"></div>
<div style="left:1211.0px;top:483.7px;width:25.0px;height:1.3px;background:#b9b9b9;"></div>
<div style="left:1214.2px;top:487.7px;width:18.5px;height:1.3px;background:#b9b9b9;"></div>
<div style="left:1211.0px;top:491.8px;width:25.0px;height:1.3px;background:#b9b9b9;"></div>
<div style="left:1214.2px;top:495.8px;width:18.5px;height:1.3px;background:#b9b9b9;"></div>
<div style="left:1211.0px;top:499.8px;width:25.0px;height:1.3px;background:#b9b9b9;"></div>
<div style="left:1214.2px;top:503.8px;width:18.5px;height:1.3px;background:#b9b9b9;"></div>
<div style="left:1250.0px;top:483.7px;width:24.0px;height:1.3px;background:#b9b9b9;"></div>
<div style="left:1256.2px;top:487.7px;width:17.8px;height:1.3px;background:#b9b9b9;"></div>
<div style="left:1250.0px;top:491.8px;width:24.0px;height:1.3px;background:#b9b9b9;"></div>
<div style="left:1256.2px;top:495.8px;width:17.8px;height:1.3px;background:#b9b9b9;"></div>
<div style="left:1250.0px;top:499.8px;width:24.0px;height:1.3px;background:#b9b9b9;"></div>
<div style="left:1256.2px;top:503.8px;width:17.8px;height:1.3px;background:#b9b9b9;"></div>
<div style="left:1284.8px;top:476.5px;width:1.2px;height:36.1px;background:#d0d0d0;"></div>
<svg style="left:1295.0px;top:483.0px;" width="29.0" height="22.0" viewBox="0 0 29 22"><path d="M0 0.7H28" stroke="#b9b9b9" stroke-width="1.300"/><path d="M15 4.7H28" stroke="#b9b9b9" stroke-width="1.300"/><path d="M15 8.7H28" stroke="#b9b9b9" stroke-width="1.300"/><path d="M15 12.7H28" stroke="#b9b9b9" stroke-width="1.300"/><path d="M15 16.7H28" stroke="#b9b9b9" stroke-width="1.300"/><path d="M0 20.7H28" stroke="#b9b9b9" stroke-width="1.300"/><path d="M13 10H2M6.500 5L1.500 10l5 5" fill="none" stroke="#b0b0b0" stroke-width="3.200"/></svg>
<svg style="left:1333.0px;top:483.0px;" width="29.0" height="22.0" viewBox="0 0 29 22"><path d="M0 0.7H28" stroke="#b9b9b9" stroke-width="1.300"/><path d="M15 4.7H28" stroke="#b9b9b9" stroke-width="1.300"/><path d="M15 8.7H28" stroke="#b9b9b9" stroke-width="1.300"/><path d="M15 12.7H28" stroke="#b9b9b9" stroke-width="1.300"/><path d="M15 16.7H28" stroke="#b9b9b9" stroke-width="1.300"/><path d="M0 20.7H28" stroke="#b9b9b9" stroke-width="1.300"/><path d="M0 10h11M6.500 5l5 5-5 5" fill="none" stroke="#b0b0b0" stroke-width="3.200"/></svg>
<svg style="left:1380.0px;top:480.0px;" width="28.0" height="29.0" viewBox="0 0 28 29"><rect x=".6" y=".6" width="26" height="27" fill="#f6f1f7" stroke="#c2c2c2" stroke-width="1.200"/><path d="M.6 6h26M.6 22h26M13.500.6V6M13.500 22v5.600" stroke="#c2c2c2" stroke-width="1.200"/><path d="M4 14h19M7.500 10.500L4 14l3.500 3.500M19.500 10.500L23 14l-3.500 3.500" fill="none" stroke="#b0b0b0" stroke-width="1.400"/></svg>
<span class="t" style="left:1414.3px;top:485.30px;font-size:23.20px;line-height:23.20px;color:#b0b0b0;transform:scaleX(1.0527);">Merge &amp; Center</span>
<svg style="left:1597.8px;top:491.7px;" width="9.0" height="5.0" viewBox="0 0 9 5"><path d="M0 0H9L4.5 5Z" fill="#c4c4c4"/></svg>
<div style="left:1621.1px;top:417.2px;width:215.7px;height:39.4px;background:#fdfdfd;border:1.2px solid #c6c6c6;"></div>
<span class="t" style="left:1628.6px;top:428.30px;font-size:23.20px;line-height:23.20px;color:#a9a9a9;transform:scaleX(0.9656);">General</span>
<svg style="left:1821.8px;top:433.9px;" width="9.0" height="5.0" viewBox="0 0 9 5"><path d="M0 0H9L4.5 5Z" fill="#b5b5b5"/></svg>
<span class="t" style="left:1632.5px;top:480.30px;font-size:29.00px;line-height:29.00px;color:#a8a6a8;font-weight:bold;transform:scaleX(0.8370);">$</span>
<svg style="left:1663.0px;top:491.7px;" width="9.0" height="5.0" viewBox="0 0 9 5"><path d="M0 0H9L4.5 5Z" fill="#c4c4c4"/></svg>
<span class="t" style="left:1682.0px;top:479.30px;font-size:31.00px;line-height:31.00px;color:#a8a6a8;transform:scaleX(0.9034);">%</span>
<svg style="left:1726.0px;top:485.0px;" width="13.0" height="18.0" viewBox="0 0 13 18"><path d="M6.500 0.500a5.500 5.500 0 0 1 5.500 5.500c0 5-3.500 9.500-10 11.500 3-2.500 4.500-5 4.500-7a5 5 0 0 1-5-5 5 5 0 0 1 5-5z" fill="#aaa7aa"/></svg>
<div style="left:1755.8px;top:476.5px;width:1.2px;height:36.1px;background:#d0d0d0;"></div>
<span class="t" style="left:1780.0px;top:480.30px;font-size:17.00px;line-height:17.00px;color:#b0b0b0;">.0</span>
<span class="t" style="left:1769.0px;top:496.30px;font-size:13.00px;line-height:13.00px;color:#c0c0c0;">.00</span>
<svg style="left:1766.0px;top:483.0px;" width="14.0" height="12.0" viewBox="0 0 14 12"><path d="M13 6H2M6 1.500L1.500 6 6 10.500" fill="none" stroke="#b0b0b0" stroke-width="2.400"/></svg>
<span class="t" style="left:1818.0px;top:483.30px;font-size:13.00px;line-height:13.00px;color:#c0c0c0;">.00</span>
<span class="t" style="left:1818.0px;top:495.30px;font-size:17.00px;line-height:17.00px;color:#b0b0b0;">.0</span>
<svg style="left:1804.0px;top:497.0px;" width="14.0" height="12.0" viewBox="0 0 14 12"><path d="M0 6h11M7 1.500L11.500 6 7 10.500" fill="none" stroke="#b0b0b0" stroke-width="2.400"/></svg>
<svg style="left:1888.5px;top:408.0px;" width="60.0" height="59.0" viewBox="0 0 60 59"><rect x=".7" y=".7" width="51.500" height="46.500" fill="#f6f1f7" stroke="#c4c4c4" stroke-width="1.300"/>
<path d="M13.500 .7h15.500v12.300h4.300v12h1v11h-8v10.700h-12.800z" fill="#b4b1b4"/>
<path d="M.7 12.500h51.500M.7 24.500h51.500M.7 36h51.500M13.500.7v46.500M38.500.7v46.500" stroke="#d9d5da" stroke-width="1.300" fill="none"/>
<rect x="28" y="33.500" width="30.500" height="23.500" fill="#f6f1f7" stroke="#c4c4c4" stroke-width="1.300"/>
<path d="M36.500 42h13M36.500 48h13M47 38l-7.500 14" stroke="#9d9a9d" stroke-width="1.700" fill="none"/></svg>
<span class="t" style="left:1854.9px;top:475.30px;font-size:23.20px;line-height:23.20px;color:#b0b0b0;transform:scaleX(1.0372);">Conditional</span>
<span class="t" style="left:1850.2px;top:506.30px;font-size:23.20px;line-height:23.20px;color:#b0b0b0;transform:scaleX(1.0290);">Formatting</span>
<svg style="left:1972.9px;top:513.5px;" width="9.0" height="5.0" viewBox="0 0 9 5"><path d="M0 0H9L4.5 5Z" fill="#c4c4c4"/></svg>
<svg style="left:2010.0px;top:408.0px;" width="63.0" height="59.0" viewBox="0 0 63 59"><rect x=".7" y=".7" width="56" height="50" fill="#f6f1f7" stroke="#c4c4c4" stroke-width="1.300"/><rect x="14.500" y="11" width="42" height="39.500" fill="#dcd9dc"/>
<path d="M.7 11h56M.7 21h56M.7 31h56M.7 41h56M14.500.7v50M28.500.7v50M42.500.7v50" stroke="#cfcccf" stroke-width="1.200" fill="none"/><g transform="translate(15,13)"><path d="M46 0v14L34 25l-5-5z" fill="#b4b1b4"/><path d="M27 22l5 5-6 5.500-5-5z" fill="#b4b1b4"/><path d="M0 45c9-3 12-7 14-12 2-4.500 7-5.500 10.500-2.500 3.500 3.500 3 8.500-1 11.500-4 3-9 3.500-23.500 3z" fill="#b4b1b4"/><path d="M14.500 34c4 0 8 3 9 8" fill="none" stroke="#f3f3f3" stroke-width="1.200"/></g></svg>
<span class="t" style="left:1988.3px;top:475.30px;font-size:23.20px;line-height:23.20px;color:#b0b0b0;transform:scaleX(0.9787);">Format as</span>
<span class="t" style="left:2003.4px;top:506.30px;font-size:23.20px;line-height:23.20px;color:#b0b0b0;transform:scaleX(0.9628);">Table</span>
<svg style="left:2066.0px;top:513.5px;" width="9.0" height="5.0" viewBox="0 0 9 5"><path d="M0 0H9L4.5 5Z" fill="#c4c4c4"/></svg>
<svg style="left:2107.0px;top:406.0px;" width="63.0" height="61.0" viewBox="0 0 63 61"><rect x=".7" y=".7" width="55" height="46.500" fill="#f6f1f7" stroke="#c4c4c4" stroke-width="1.300"/><rect x="15.500" y="12.500" width="25" height="23" fill="#dcd9dc"/>
<path d="M.7 12.500h55M.7 35.500h55M15.500.7v46.500M40.500.7v46.500" stroke="#cfcccf" stroke-width="1.200" fill="none"/><g transform="translate(15,15)"><path d="M46 0v14L34 25l-5-5z" fill="#b4b1b4"/><path d="M27 22l5 5-6 5.500-5-5z" fill="#b4b1b4"/><path d="M0 45c9-3 12-7 14-12 2-4.500 7-5.500 10.500-2.500 3.500 3.500 3 8.500-1 11.500-4 3-9 3.500-23.500 3z" fill="#b4b1b4"/><path d="M14.500 34c4 0 8 3 9 8" fill="none" stroke="#f3f3f3" stroke-width="1.200"/></g></svg>
<span class="t" style="left:2115.6px;top:475.30px;font-size:23.20px;line-height:23.20px;color:#b0b0b0;transform:scaleX(0.9558);">Cell</span>
<span class="t" style="left:2096.7px;top:506.30px;font-size:23.20px;line-height:23.20px;color:#b0b0b0;transform:scaleX(0.9418);">Styles</span>
<svg style="left:2164.9px;top:513.5px;" width="9.0" height="5.0" viewBox="0 0 9 5"><path d="M0 0H9L4.5 5Z" fill="#c4c4c4"/></svg>
<svg style="left:2192.0px;top:405.0px;" width="58.0" height="58.0" viewBox="0 0 58 58"><rect x="5" y="1.300" width="30.700" height="11.400" fill="#f6f1f7" stroke="#c4c4c4" stroke-width="1.200"/><path d="M20.300 1.300v11.400" stroke="#c4c4c4"/>
<rect x="27.400" y="17.300" width="28.600" height="12.400" fill="#dcd9dc" stroke="#c4c4c4" stroke-width="1.200"/><path d="M41.700 17.300v12.400" stroke="#c4c4c4"/>
<rect x="5" y="34.300" width="30.700" height="22.300" fill="#f6f1f7" stroke="#c4c4c4" stroke-width="1.200"/><path d="M20.300 34.300v22.300M5 45.500h30.700" stroke="#c4c4c4"/>
<path d="M21 23.300H5M10.500 17.500L3.500 23.300l7 5.800" fill="none" stroke="#b0b0b0" stroke-width="3.600"/></svg>
<span class="t" style="left:2194.2px;top:475.30px;font-size:23.20px;line-height:23.20px;color:#b0b0b0;transform:scaleX(0.9927);">Insert</span>
<svg style="left:2219.0px;top:513.6px;" width="9.0" height="5.0" viewBox="0 0 9 5"><path d="M0 0H9L4.5 5Z" fill="#c4c4c4"/></svg>
<svg style="left:2268.0px;top:405.0px;" width="62.0" height="58.0" viewBox="0 0 62 58"><rect x="1.300" y="1.300" width="30.400" height="11.400" fill="#f6f1f7" stroke="#c4c4c4" stroke-width="1.200"/><path d="M16.500 1.300v11.400" stroke="#c4c4c4"/>
<rect x="12.200" y="17.300" width="16" height="12.400" fill="#dcd9dc" stroke="#c4c4c4" stroke-width="1.200"/><path d="M28 17.500l8 6-8 6z" fill="#dcd9dc"/>
<rect x="1.300" y="34.300" width="30.400" height="22.300" fill="#f6f1f7" stroke="#c4c4c4" stroke-width="1.200"/><path d="M16.500 34.300v22.300M1.300 45.500h30.400" stroke="#c4c4c4"/>
<path d="M32 13c9 4 18 14 28 26" fill="none" stroke="#b4b1b4" stroke-width="3.500" stroke-linecap="round"/><path d="M60 14c-10 4-20 14-28 25" fill="none" stroke="#b4b1b4" stroke-width="3.500" stroke-linecap="round"/></svg>
<span class="t" style="left:2263.6px;top:475.30px;font-size:23.20px;line-height:23.20px;color:#b0b0b0;">Delete</span>
<svg style="left:2292.8px;top:513.6px;" width="9.0" height="5.0" viewBox="0 0 9 5"><path d="M0 0H9L4.5 5Z" fill="#c4c4c4"/></svg>
<svg style="left:2347.0px;top:404.0px;" width="56.0" height="59.0" viewBox="0 0 56 59"><path d="M1.500 1v9M44.500 1v9" stroke="#b9b9b9" stroke-width="1.200"/><path d="M6 5.500h34M11 1.500L6 5.500l5 4M35 1.500l5 4-5 4" fill="none" stroke="#b0b0b0" stroke-width="2.200"/>
<path d="M1.500 12.500h52v38h-8l-6 7h-14v-7h-3l-6 7h-15z" fill="#f6f1f7" stroke="#c4c4c4" stroke-width="1.200"/><path d="M1.500 26h52M1.500 40h52M15.500 12.500v38M30.500 12.500v38M44.500 12.500v38" stroke="#d9d5da" stroke-width="1.200" fill="none"/><rect x="16" y="22.500" width="14" height="17.500" fill="#b4b1b4"/></svg>
<span class="t" style="left:2338.3px;top:475.30px;font-size:23.20px;line-height:23.20px;color:#b0b0b0;">Format</span>
<svg style="left:2371.0px;top:513.6px;" width="9.0" height="5.0" viewBox="0 0 9 5"><path d="M0 0H9L4.5 5Z" fill="#c4c4c4"/></svg>
<svg style="left:2431.0px;top:405.0px;" width="25.0" height="27.0" viewBox="0 0 25 27"><path d="M1 0.500h22.500v6h-2.200l-.6-2.500H7.500l9 9.300-9.500 10h14l.8-3h2.200v6.200H1v-2.600l10-10.400L1 3z" fill="#555"/></svg>
<span class="t" style="left:2462.7px;top:409.30px;font-size:23.20px;line-height:23.20px;color:#262626;transform:scaleX(1.0133);">AutoSum</span>
<svg style="left:2571.5px;top:416.0px;" width="9.0" height="5.0" viewBox="0 0 9 5"><path d="M0 0H9L4.5 5Z" fill="#555"/></svg>
<svg style="left:2429.0px;top:443.0px;" width="28.0" height="28.0" viewBox="0 0 28 28"><rect x=".6" y=".6" width="26.500" height="26.500" fill="#f6f1f7" stroke="#c4c4c4" stroke-width="1.200"/><rect x=".6" y=".6" width="26.500" height="4.500" fill="#b9b9b9"/><path d="M13.800 8v14M7.500 15.500l6.300 6.500 6.300-6.500" fill="none" stroke="#b0b0b0" stroke-width="2.600"/></svg>
<span class="t" style="left:2463.8px;top:447.30px;font-size:23.20px;line-height:23.20px;color:#b0b0b0;transform:scaleX(0.8942);">Fill</span>
<svg style="left:2500.0px;top:454.5px;" width="9.0" height="5.0" viewBox="0 0 9 5"><path d="M0 0H9L4.5 5Z" fill="#c4c4c4"/></svg>
<svg style="left:2431.0px;top:483.0px;" width="26.0" height="25.0" viewBox="0 0 26 25"><path d="M16 1.500l8 7.500-13 13.500-8-7.500z" fill="#e8889a"/><path d="M2 16.500l7.500 7-2.500 1.500-6.500-6z" fill="#e8889a"/></svg>
<span class="t" style="left:2462.7px;top:487.30px;font-size:23.20px;line-height:23.20px;color:#262626;transform:scaleX(0.9577);">Clear</span>
<svg style="left:2524.0px;top:493.8px;" width="9.0" height="5.0" viewBox="0 0 9 5"><path d="M0 0H9L4.5 5Z" fill="#555"/></svg>
<span class="t" style="left:2596.0px;top:406.30px;font-size:25.00px;line-height:25.00px;color:#b0b0b0;transform:scaleX(1.1394);">A</span>
<span class="t" style="left:2596.0px;top:437.30px;font-size:25.00px;line-height:25.00px;color:#b0b0b0;transform:scaleX(1.1787);">Z</span>
<svg style="left:2618.0px;top:421.0px;" width="34.0" height="34.0" viewBox="0 0 34 34"><path d="M1 1h31L19.500 14v17h-5.500V14z" fill="#b4b1b4"/><path d="M15.500 14v16h2.500V14" fill="#f3f3f3"/></svg>
<span class="t" style="left:2589.6px;top:475.30px;font-size:23.20px;line-height:23.20px;color:#b0b0b0;transform:scaleX(1.0501);">Sort &amp;</span>
<span class="t" style="left:2588.7px;top:507.30px;font-size:23.20px;line-height:23.20px;color:#b0b0b0;transform:scaleX(1.0261);">Filter</span>
<svg style="left:2648.5px;top:513.8px;" width="9.0" height="5.0" viewBox="0 0 9 5"><path d="M0 0H9L4.5 5Z" fill="#c4c4c4"/></svg>
<svg style="left:2676.0px;top:404.0px;" width="56.0" height="56.0" viewBox="0 0 56 56"><circle cx="34" cy="21" r="18" fill="#f6f1f7" stroke="#b4b1b4" stroke-width="3.500"/><path d="M21.500 34L4 51.500" stroke="#b4b1b4" stroke-width="5" stroke-linecap="round"/></svg>
<span class="t" style="left:2669.4px;top:475.30px;font-size:23.20px;line-height:23.20px;color:#b0b0b0;transform:scaleX(1.0499);">Find &amp;</span>
<span class="t" style="left:2663.7px;top:507.30px;font-size:23.20px;line-height:23.20px;color:#b0b0b0;transform:scaleX(0.9817);">Select</span>
<svg style="left:2735.3px;top:513.8px;" width="9.0" height="5.0" viewBox="0 0 9 5"><path d="M0 0H9L4.5 5Z" fill="#c4c4c4"/></svg>
<div style="left:542.0px;top:567.8px;width:2309.0px;height:84.0px;background:#e6e6e6;"></div>
<div style="left:552.0px;top:588.0px;width:201.5px;height:43.6px;background:#fdfdfd;border:1px solid #cfcfcf;"></div>
<span class="t" style="left:560.3px;top:600.30px;font-size:23.20px;line-height:23.20px;color:#222;transform:scaleX(1.0216);">D2</span>
<svg style="left:727.8px;top:604.9px;" width="14.0" height="7.5" viewBox="0 0 14 7.5"><path d="M0 0H14L7.0 7.5Z" fill="#777"/></svg>
<div style="left:781.8px;top:600.0px;width:4.2px;height:4.2px;background:#b9b9b9;"></div>
<div style="left:781.8px;top:608.7px;width:4.2px;height:4.2px;background:#b9b9b9;"></div>
<div style="left:781.8px;top:617.4px;width:4.2px;height:4.2px;background:#b9b9b9;"></div>
<div style="left:814.0px;top:588.0px;width:217.5px;height:43.6px;background:#fdfdfd;border:1px solid #cfcfcf;"></div>
<svg style="left:840.0px;top:600.0px;" width="24.0" height="22.0" viewBox="0 0 24 22"><path d="M2 2l19 18M21 2L2 20" stroke="#c6c6c6" stroke-width="3.200"/></svg>
<svg style="left:909.0px;top:598.0px;" width="30.0" height="24.0" viewBox="0 0 30 24"><path d="M2.500 13.500l8 7.500L27 2.500" fill="none" stroke="#c6c6c6" stroke-width="4.400"/></svg>
<span class="t" style="left:982.5px;top:594.30px;font-size:33.00px;line-height:33.00px;color:#6f6f6f;font-weight:bold;font-style:italic;font-family:'Liberation Serif',serif;">f</span>
<span class="t" style="left:994.0px;top:599.30px;font-size:27.00px;line-height:27.00px;color:#6f6f6f;font-weight:bold;font-style:italic;font-family:'Liberation Serif',serif;">x</span>
<div style="left:1038.0px;top:588.0px;width:1813.0px;height:43.6px;background:#fdfdfd;border:1px solid #cfcfcf;"></div>
<span class="t" style="left:1060.7px;top:600.30px;font-size:23.20px;line-height:23.20px;color:#222;transform:scaleX(1.0946);">&lt;sum(Expression1)&gt;</span>
<div style="left:542.0px;top:651.8px;width:2309.0px;height:37.2px;background:#e6e6e6;"></div>
<div style="left:542.0px;top:689.0px;width:53.0px;height:945.0px;background:#e6e6e6;"></div>
<div style="left:596.0px;top:690.0px;width:2255.0px;height:944.0px;background:#fff;"></div>
<div style="left:905.0px;top:652.0px;width:254.0px;height:37.0px;background:#d2d2d2;"></div>
<div style="left:698.0px;top:652.0px;width:1.0px;height:37.0px;background:#b9b9b9;"></div>
<span class="t" style="left:638.2px;top:660.30px;font-size:26.50px;line-height:26.50px;color:#1a1a1a;transform:scaleX(.93);transform-origin:50% 50%;">A</span>
<div style="left:801.0px;top:652.0px;width:1.0px;height:37.0px;background:#b9b9b9;"></div>
<span class="t" style="left:741.2px;top:660.30px;font-size:26.50px;line-height:26.50px;color:#1a1a1a;transform:scaleX(.93);transform-origin:50% 50%;">B</span>
<div style="left:904.0px;top:652.0px;width:1.0px;height:37.0px;background:#b9b9b9;"></div>
<span class="t" style="left:843.4px;top:660.30px;font-size:26.50px;line-height:26.50px;color:#1a1a1a;transform:scaleX(.93);transform-origin:50% 50%;">C</span>
<div style="left:1159.0px;top:652.0px;width:1.0px;height:37.0px;background:#b9b9b9;"></div>
<span class="t" style="left:1022.4px;top:660.30px;font-size:26.50px;line-height:26.50px;color:#217346;transform:scaleX(.93);transform-origin:50% 50%;">D</span>
<div style="left:1414.0px;top:652.0px;width:1.0px;height:37.0px;background:#b9b9b9;"></div>
<span class="t" style="left:1278.2px;top:660.30px;font-size:26.50px;line-height:26.50px;color:#1a1a1a;transform:scaleX(.93);transform-origin:50% 50%;">E</span>
<div style="left:1669.0px;top:652.0px;width:1.0px;height:37.0px;background:#b9b9b9;"></div>
<span class="t" style="left:1533.9px;top:660.30px;font-size:26.50px;line-height:26.50px;color:#1a1a1a;transform:scaleX(.93);transform-origin:50% 50%;">F</span>
<div style="left:1805.0px;top:652.0px;width:1.0px;height:37.0px;background:#b9b9b9;"></div>
<span class="t" style="left:1727.2px;top:660.30px;font-size:26.50px;line-height:26.50px;color:#1a1a1a;transform:scaleX(.93);transform-origin:50% 50%;">G</span>
<div style="left:1941.0px;top:652.0px;width:1.0px;height:37.0px;background:#b9b9b9;"></div>
<span class="t" style="left:1863.9px;top:660.30px;font-size:26.50px;line-height:26.50px;color:#1a1a1a;transform:scaleX(.93);transform-origin:50% 50%;">H</span>
<div style="left:2077.0px;top:652.0px;width:1.0px;height:37.0px;background:#b9b9b9;"></div>
<span class="t" style="left:2005.8px;top:660.30px;font-size:26.50px;line-height:26.50px;color:#1a1a1a;transform:scaleX(.93);transform-origin:50% 50%;">I</span>
<div style="left:2213.0px;top:652.0px;width:1.0px;height:37.0px;background:#b9b9b9;"></div>
<span class="t" style="left:2138.9px;top:660.30px;font-size:26.50px;line-height:26.50px;color:#1a1a1a;transform:scaleX(.93);transform-origin:50% 50%;">J</span>
<div style="left:2349.0px;top:652.0px;width:1.0px;height:37.0px;background:#b9b9b9;"></div>
<span class="t" style="left:2272.7px;top:660.30px;font-size:26.50px;line-height:26.50px;color:#1a1a1a;transform:scaleX(.93);transform-origin:50% 50%;">K</span>
<div style="left:2485.0px;top:652.0px;width:1.0px;height:37.0px;background:#b9b9b9;"></div>
<span class="t" style="left:2410.1px;top:660.30px;font-size:26.50px;line-height:26.50px;color:#1a1a1a;transform:scaleX(.93);transform-origin:50% 50%;">L</span>
<div style="left:2621.0px;top:652.0px;width:1.0px;height:37.0px;background:#b9b9b9;"></div>
<span class="t" style="left:2542.5px;top:660.30px;font-size:26.50px;line-height:26.50px;color:#1a1a1a;transform:scaleX(.93);transform-origin:50% 50%;">M</span>
<div style="left:2757.0px;top:652.0px;width:1.0px;height:37.0px;background:#b9b9b9;"></div>
<span class="t" style="left:2679.9px;top:660.30px;font-size:26.50px;line-height:26.50px;color:#1a1a1a;transform:scaleX(.93);transform-origin:50% 50%;">N</span>
<div style="left:2893.0px;top:652.0px;width:1.0px;height:37.0px;background:#b9b9b9;"></div>
<span class="t" style="left:2815.2px;top:660.30px;font-size:26.50px;line-height:26.50px;color:#1a1a1a;transform:scaleX(.93);transform-origin:50% 50%;">O</span>
<div style="left:595.0px;top:652.0px;width:1.0px;height:37.0px;background:#b9b9b9;"></div>
<div style="left:542.0px;top:689.0px;width:2309.0px;height:1.0px;background:#9f9f9f;"></div>
<div style="left:905.0px;top:686.0px;width:254.0px;height:3.0px;background:#217346;"></div>
<svg style="left:562.7px;top:656.5px;" width="30.0" height="30.0" viewBox="0 0 30 30"><path d="M29 0V29.200H0Z" fill="#b4b4b4"/></svg>
<div style="left:542.0px;top:727.0px;width:53.0px;height:1.0px;background:#b0b0b0;"></div>
<div style="left:596.0px;top:727.0px;width:2255.0px;height:1.0px;background:#d4d4d4;"></div>
<span class="t" style="left:561.1px;top:697.30px;font-size:27.00px;line-height:27.00px;color:#1a1a1a;transform:scaleX(.97);transform-origin:50% 50%;">1</span>
<div style="left:542.0px;top:728.0px;width:53.0px;height:37.0px;background:#d2d2d2;"></div>
<div style="left:542.0px;top:765.0px;width:53.0px;height:1.0px;background:#b0b0b0;"></div>
<div style="left:596.0px;top:765.0px;width:2255.0px;height:1.0px;background:#d4d4d4;"></div>
<span class="t" style="left:561.1px;top:735.30px;font-size:27.00px;line-height:27.00px;color:#217346;transform:scaleX(.97);transform-origin:50% 50%;">2</span>
<div style="left:542.0px;top:766.0px;width:53.0px;height:37.0px;background:#d2d2d2;"></div>
<div style="left:542.0px;top:803.0px;width:53.0px;height:1.0px;background:#b0b0b0;"></div>
<div style="left:596.0px;top:803.0px;width:2255.0px;height:1.0px;background:#d4d4d4;"></div>
<span class="t" style="left:561.1px;top:773.30px;font-size:27.00px;line-height:27.00px;color:#217346;transform:scaleX(.97);transform-origin:50% 50%;">3</span>
<div style="left:542.0px;top:841.0px;width:53.0px;height:1.0px;background:#b0b0b0;"></div>
<div style="left:596.0px;top:841.0px;width:2255.0px;height:1.0px;background:#d4d4d4;"></div>
<span class="t" style="left:561.1px;top:811.30px;font-size:27.00px;line-height:27.00px;color:#1a1a1a;transform:scaleX(.97);transform-origin:50% 50%;">4</span>
<div style="left:542.0px;top:879.0px;width:53.0px;height:1.0px;background:#b0b0b0;"></div>
<div style="left:596.0px;top:879.0px;width:2255.0px;height:1.0px;background:#d4d4d4;"></div>
<span class="t" style="left:561.1px;top:849.30px;font-size:27.00px;line-height:27.00px;color:#1a1a1a;transform:scaleX(.97);transform-origin:50% 50%;">5</span>
<div style="left:542.0px;top:917.0px;width:53.0px;height:1.0px;background:#b0b0b0;"></div>
<div style="left:596.0px;top:917.0px;width:2255.0px;height:1.0px;background:#d4d4d4;"></div>
<span class="t" style="left:561.1px;top:887.30px;font-size:27.00px;line-height:27.00px;color:#1a1a1a;transform:scaleX(.97);transform-origin:50% 50%;">6</span>
<div style="left:542.0px;top:955.0px;width:53.0px;height:1.0px;background:#b0b0b0;"></div>
<div style="left:596.0px;top:955.0px;width:2255.0px;height:1.0px;background:#d4d4d4;"></div>
<span class="t" style="left:561.1px;top:925.30px;font-size:27.00px;line-height:27.00px;color:#1a1a1a;transform:scaleX(.97);transform-origin:50% 50%;">7</span>
<div style="left:542.0px;top:993.0px;width:53.0px;height:1.0px;background:#b0b0b0;"></div>
<div style="left:596.0px;top:993.0px;width:2255.0px;height:1.0px;background:#d4d4d4;"></div>
<span class="t" style="left:561.1px;top:963.30px;font-size:27.00px;line-height:27.00px;color:#1a1a1a;transform:scaleX(.97);transform-origin:50% 50%;">8</span>
<div style="left:542.0px;top:1031.0px;width:53.0px;height:1.0px;background:#b0b0b0;"></div>
<div style="left:596.0px;top:1031.0px;width:2255.0px;height:1.0px;background:#d4d4d4;"></div>
<span class="t" style="left:561.1px;top:1001.30px;font-size:27.00px;line-height:27.00px;color:#1a1a1a;transform:scaleX(.97);transform-origin:50% 50%;">9</span>
<div style="left:542.0px;top:1069.0px;width:53.0px;height:1.0px;background:#b0b0b0;"></div>
<div style="left:596.0px;top:1069.0px;width:2255.0px;height:1.0px;background:#d4d4d4;"></div>
<span class="t" style="left:553.6px;top:1039.30px;font-size:27.00px;line-height:27.00px;color:#1a1a1a;transform:scaleX(.97);transform-origin:50% 50%;">10</span>
<div style="left:542.0px;top:1107.0px;width:53.0px;height:1.0px;background:#b0b0b0;"></div>
<div style="left:596.0px;top:1107.0px;width:2255.0px;height:1.0px;background:#d4d4d4;"></div>
<span class="t" style="left:554.6px;top:1077.30px;font-size:27.00px;line-height:27.00px;color:#1a1a1a;transform:scaleX(.97);transform-origin:50% 50%;">11</span>
<div style="left:542.0px;top:1145.0px;width:53.0px;height:1.0px;background:#b0b0b0;"></div>
<div style="left:596.0px;top:1145.0px;width:2255.0px;height:1.0px;background:#d4d4d4;"></div>
<span class="t" style="left:553.6px;top:1115.30px;font-size:27.00px;line-height:27.00px;color:#1a1a1a;transform:scaleX(.97);transform-origin:50% 50%;">12</span>
<div style="left:542.0px;top:1183.0px;width:53.0px;height:1.0px;background:#b0b0b0;"></div>
<div style="left:596.0px;top:1183.0px;width:2255.0px;height:1.0px;background:#d4d4d4;"></div>
<span class="t" style="left:553.6px;top:1153.30px;font-size:27.00px;line-height:27.00px;color:#1a1a1a;transform:scaleX(.97);transform-origin:50% 50%;">13</span>
<div style="left:542.0px;top:1221.0px;width:53.0px;height:1.0px;background:#b0b0b0;"></div>
<div style="left:596.0px;top:1221.0px;width:2255.0px;height:1.0px;background:#d4d4d4;"></div>
<span class="t" style="left:553.6px;top:1191.30px;font-size:27.00px;line-height:27.00px;color:#1a1a1a;transform:scaleX(.97);transform-origin:50% 50%;">14</span>
<div style="left:542.0px;top:1259.0px;width:53.0px;height:1.0px;background:#b0b0b0;"></div>
<div style="left:596.0px;top:1259.0px;width:2255.0px;height:1.0px;background:#d4d4d4;"></div>
<span class="t" style="left:553.6px;top:1229.30px;font-size:27.00px;line-height:27.00px;color:#1a1a1a;transform:scaleX(.97);transform-origin:50% 50%;">15</span>
<div style="left:542.0px;top:1297.0px;width:53.0px;height:1.0px;background:#b0b0b0;"></div>
<div style="left:596.0px;top:1297.0px;width:2255.0px;height:1.0px;background:#d4d4d4;"></div>
<span class="t" style="left:553.6px;top:1267.30px;font-size:27.00px;line-height:27.00px;color:#1a1a1a;transform:scaleX(.97);transform-origin:50% 50%;">16</span>
<div style="left:542.0px;top:1335.0px;width:53.0px;height:1.0px;background:#b0b0b0;"></div>
<div style="left:596.0px;top:1335.0px;width:2255.0px;height:1.0px;background:#d4d4d4;"></div>
<span class="t" style="left:553.6px;top:1305.30px;font-size:27.00px;line-height:27.00px;color:#1a1a1a;transform:scaleX(.97);transform-origin:50% 50%;">17</span>
<div style="left:542.0px;top:1373.0px;width:53.0px;height:1.0px;background:#b0b0b0;"></div>
<div style="left:596.0px;top:1373.0px;width:2255.0px;height:1.0px;background:#d4d4d4;"></div>
<span class="t" style="left:553.6px;top:1343.30px;font-size:27.00px;line-height:27.00px;color:#1a1a1a;transform:scaleX(.97);transform-origin:50% 50%;">18</span>
<div style="left:542.0px;top:1411.0px;width:53.0px;height:1.0px;background:#b0b0b0;"></div>
<div style="left:596.0px;top:1411.0px;width:2255.0px;height:1.0px;background:#d4d4d4;"></div>
<span class="t" style="left:553.6px;top:1381.30px;font-size:27.00px;line-height:27.00px;color:#1a1a1a;transform:scaleX(.97);transform-origin:50% 50%;">19</span>
<div style="left:542.0px;top:1449.0px;width:53.0px;height:1.0px;background:#b0b0b0;"></div>
<div style="left:596.0px;top:1449.0px;width:2255.0px;height:1.0px;background:#d4d4d4;"></div>
<span class="t" style="left:553.6px;top:1419.30px;font-size:27.00px;line-height:27.00px;color:#1a1a1a;transform:scaleX(.97);transform-origin:50% 50%;">20</span>
<div style="left:542.0px;top:1487.0px;width:53.0px;height:1.0px;background:#b0b0b0;"></div>
<div style="left:596.0px;top:1487.0px;width:2255.0px;height:1.0px;background:#d4d4d4;"></div>
<span class="t" style="left:553.6px;top:1457.30px;font-size:27.00px;line-height:27.00px;color:#1a1a1a;transform:scaleX(.97);transform-origin:50% 50%;">21</span>
<div style="left:542.0px;top:1525.0px;width:53.0px;height:1.0px;background:#b0b0b0;"></div>
<div style="left:596.0px;top:1525.0px;width:2255.0px;height:1.0px;background:#d4d4d4;"></div>
<span class="t" style="left:553.6px;top:1495.30px;font-size:27.00px;line-height:27.00px;color:#1a1a1a;transform:scaleX(.97);transform-origin:50% 50%;">22</span>
<div style="left:542.0px;top:1563.0px;width:53.0px;height:1.0px;background:#b0b0b0;"></div>
<div style="left:596.0px;top:1563.0px;width:2255.0px;height:1.0px;background:#d4d4d4;"></div>
<span class="t" style="left:553.6px;top:1533.30px;font-size:27.00px;line-height:27.00px;color:#1a1a1a;transform:scaleX(.97);transform-origin:50% 50%;">23</span>
<div style="left:542.0px;top:1601.0px;width:53.0px;height:1.0px;background:#b0b0b0;"></div>
<div style="left:596.0px;top:1601.0px;width:2255.0px;height:1.0px;background:#d4d4d4;"></div>
<span class="t" style="left:553.6px;top:1571.30px;font-size:27.00px;line-height:27.00px;color:#1a1a1a;transform:scaleX(.97);transform-origin:50% 50%;">24</span>
<div style="left:542.0px;top:1639.0px;width:53.0px;height:1.0px;background:#b0b0b0;"></div>
<span class="t" style="left:553.6px;top:1609.30px;font-size:27.00px;line-height:27.00px;color:#1a1a1a;transform:scaleX(.97);transform-origin:50% 50%;">25</span>
<div style="left:595.0px;top:690.0px;width:1.0px;height:944.0px;background:#9f9f9f;"></div>
<div style="left:698.0px;top:690.0px;width:1.0px;height:944.0px;background:#d4d4d4;"></div>
<div style="left:801.0px;top:690.0px;width:1.0px;height:944.0px;background:#d4d4d4;"></div>
<div style="left:904.0px;top:690.0px;width:1.0px;height:944.0px;background:#d4d4d4;"></div>
<div style="left:1159.0px;top:690.0px;width:1.0px;height:944.0px;background:#d4d4d4;"></div>
<div style="left:1414.0px;top:690.0px;width:1.0px;height:944.0px;background:#d4d4d4;"></div>
<div style="left:1669.0px;top:690.0px;width:1.0px;height:944.0px;background:#d4d4d4;"></div>
<div style="left:1805.0px;top:690.0px;width:1.0px;height:944.0px;background:#d4d4d4;"></div>
<div style="left:1941.0px;top:690.0px;width:1.0px;height:944.0px;background:#d4d4d4;"></div>
<div style="left:2077.0px;top:690.0px;width:1.0px;height:944.0px;background:#d4d4d4;"></div>
<div style="left:2213.0px;top:690.0px;width:1.0px;height:944.0px;background:#d4d4d4;"></div>
<div style="left:2349.0px;top:690.0px;width:1.0px;height:944.0px;background:#d4d4d4;"></div>
<div style="left:2485.0px;top:690.0px;width:1.0px;height:944.0px;background:#d4d4d4;"></div>
<div style="left:2621.0px;top:690.0px;width:1.0px;height:944.0px;background:#d4d4d4;"></div>
<div style="left:2757.0px;top:690.0px;width:1.0px;height:944.0px;background:#d4d4d4;"></div>
<div style="left:596.0px;top:690.0px;width:1073.0px;height:37.0px;background:#5b9bd5;"></div>
<div style="left:596.0px;top:727.0px;width:1073.0px;height:38.0px;background:#ddebf7;"></div>
<div style="left:596.0px;top:765.0px;width:1073.0px;height:1.0px;background:#9bc2e6;"></div>
<div style="left:596.0px;top:803.0px;width:1073.0px;height:1.0px;background:#9bc2e6;"></div>
<div style="left:1669.0px;top:728.0px;width:1.0px;height:76.0px;background:#9bc2e6;"></div>
<svg style="left:1661.0px;top:795.5px;" width="8.5" height="8.0" viewBox="0 0 8.5 8"><path d="M8.500 0V8H0V4H4.500V0Z" fill="#4559b8"/></svg>
<div style="left:593.3px;top:728.0px;width:2.7px;height:76.0px;background:#217346;"></div>
<div style="left:905.0px;top:766.0px;width:254.0px;height:37.0px;background:#c6c6c6;"></div>
<span class="t" style="left:601.6px;top:697.30px;font-size:27.00px;line-height:27.00px;color:#fff;font-weight:bold;transform:scaleX(0.9285);">Dim1</span>
<span class="t" style="left:704.5px;top:697.30px;font-size:27.00px;line-height:27.00px;color:#fff;font-weight:bold;transform:scaleX(0.9285);">Dim2</span>
<span class="t" style="left:807.5px;top:697.30px;font-size:27.00px;line-height:27.00px;color:#fff;font-weight:bold;transform:scaleX(0.9285);">Dim3</span>
<span class="t" style="left:909.2px;top:697.30px;font-size:27.00px;line-height:27.00px;color:#fff;font-weight:bold;transform:scaleX(0.9176);">sum(Expression1)</span>
<span class="t" style="left:1164.4px;top:697.30px;font-size:27.00px;line-height:27.00px;color:#fff;font-weight:bold;transform:scaleX(0.9181);">sum(Expression2)</span>
<span class="t" style="left:1418.8px;top:697.30px;font-size:27.00px;line-height:27.00px;color:#fff;font-weight:bold;transform:scaleX(0.9193);">sum(Expression3)</span>
<span class="t" style="left:600.5px;top:736.30px;font-size:24.80px;line-height:24.80px;color:#000;transform:scaleX(1.0422);">&lt;Dim1&gt;</span>
<span class="t" style="left:704.0px;top:736.30px;font-size:24.80px;line-height:24.80px;color:#000;transform:scaleX(1.0329);">&lt;Dim2&gt;</span>
<span class="t" style="left:806.9px;top:736.30px;font-size:24.80px;line-height:24.80px;color:#000;transform:scaleX(1.0283);">&lt;Dim3&gt;</span>
<span class="t" style="left:909.2px;top:736.30px;font-size:24.80px;line-height:24.80px;color:#000;transform:scaleX(1.0248);">&lt;sum(Expression1)&gt;</span>
<span class="t" style="left:1164.4px;top:736.30px;font-size:24.80px;line-height:24.80px;color:#000;transform:scaleX(1.0235);">&lt;sum(Expression2)&gt;</span>
<span class="t" style="left:1418.8px;top:736.30px;font-size:24.80px;line-height:24.80px;color:#000;transform:scaleX(1.0248);">&lt;sum(Expression3)&gt;</span>
<div style="left:902.3px;top:725.2px;width:259.5px;height:80.5px;border:3px solid #217346;"></div>
<div style="left:905.3px;top:728.2px;width:253.5px;height:74.5px;border:1px solid rgba(255,255,255,.85);"></div>
<div style="left:1154.0px;top:798.0px;width:10.0px;height:10.0px;background:#217346;border:1.5px solid #fff;"></div>
<div style="left:1748.5px;top:704.5px;width:984.0px;height:859.0px;background:#f0f0f0;border:2px solid #1883d7;box-shadow:0 6px 22px 4px rgba(0,0,0,.28);"></div>
<div style="left:1750.0px;top:706.0px;width:981.0px;height:56.0px;background:#fff;"></div>
<span class="t" style="left:1763.5px;top:723.30px;font-size:23.60px;line-height:23.60px;color:#000;transform:scaleX(1.0083);">Edit Formatting Rule</span>
<span class="t" style="left:2586.5px;top:723.30px;font-size:24.00px;line-height:24.00px;color:#000;">?</span>
<svg style="left:2673.0px;top:723.0px;" width="22.0" height="22.0" viewBox="0 0 22 22"><path d="M1 1l20 20M21 1L1 21" stroke="#111" stroke-width="1.800"/></svg>
<span class="t" style="left:1762.0px;top:791.30px;font-size:21.40px;line-height:21.40px;color:#000;transform:scaleX(0.9396);"><u>S</u>elect a Rule Type:</span>
<div style="left:1761.4px;top:823.4px;width:958.0px;height:215.2px;background:#fff;border:2px solid #6f7378;"></div>
<div style="left:1764.0px;top:826.5px;width:953.0px;height:33.5px;background:#dedee3;"></div>
<svg style="left:1771.0px;top:841.5px;" width="16.0" height="8.0" viewBox="0 0 16 8"><path d="M0 0L15.500 3.700L0 7.400Z" fill="#000"/></svg>
<span class="t" style="left:1794.6px;top:836.30px;font-size:21.40px;line-height:21.40px;color:#000;transform:scaleX(0.9607);">Format all cells based on their values</span>
<svg style="left:1771.0px;top:876.6px;" width="16.0" height="8.0" viewBox="0 0 16 8"><path d="M0 0L15.500 3.700L0 7.400Z" fill="#000"/></svg>
<span class="t" style="left:1794.6px;top:871.30px;font-size:21.40px;line-height:21.40px;color:#000;transform:scaleX(0.9794);">Format only cells that contain</span>
<div style="left:1764.0px;top:861.1px;width:953.0px;height:1.0px;background:#ececec;"></div>
<svg style="left:1771.0px;top:911.7px;" width="16.0" height="8.0" viewBox="0 0 16 8"><path d="M0 0L15.500 3.700L0 7.400Z" fill="#000"/></svg>
<span class="t" style="left:1794.6px;top:906.30px;font-size:21.40px;line-height:21.40px;color:#000;transform:scaleX(0.9828);">Format only top or bottom ranked values</span>
<div style="left:1764.0px;top:896.2px;width:953.0px;height:1.0px;background:#ececec;"></div>
<svg style="left:1771.0px;top:946.7px;" width="16.0" height="8.0" viewBox="0 0 16 8"><path d="M0 0L15.500 3.700L0 7.400Z" fill="#000"/></svg>
<span class="t" style="left:1794.6px;top:941.30px;font-size:21.40px;line-height:21.40px;color:#000;transform:scaleX(0.9680);">Format only values that are above or below average</span>
<div style="left:1764.0px;top:931.2px;width:953.0px;height:1.0px;background:#ececec;"></div>
<svg style="left:1771.0px;top:981.8px;" width="16.0" height="8.0" viewBox="0 0 16 8"><path d="M0 0L15.500 3.700L0 7.400Z" fill="#000"/></svg>
<span class="t" style="left:1794.6px;top:976.30px;font-size:21.40px;line-height:21.40px;color:#000;transform:scaleX(0.9761);">Format only unique or duplicate values</span>
<div style="left:1764.0px;top:966.3px;width:953.0px;height:1.0px;background:#ececec;"></div>
<svg style="left:1771.0px;top:1016.9px;" width="16.0" height="8.0" viewBox="0 0 16 8"><path d="M0 0L15.500 3.700L0 7.400Z" fill="#000"/></svg>
<span class="t" style="left:1794.6px;top:1011.30px;font-size:21.40px;line-height:21.40px;color:#000;transform:scaleX(0.9871);">Use a formula to determine which cells to format</span>
<div style="left:1764.0px;top:1001.4px;width:953.0px;height:1.0px;background:#ececec;"></div>
<span class="t" style="left:1762.0px;top:1061.30px;font-size:21.40px;line-height:21.40px;color:#000;transform:scaleX(0.9674);"><u>E</u>dit the Rule Description:</span>
<div style="left:1761.4px;top:1092.4px;width:958.4px;height:395.0px;background:#fff;border:1.3px solid #828790;"></div>
<span class="t" style="left:1771.8px;top:1108.30px;font-size:21.40px;line-height:21.40px;color:#000;font-weight:bold;transform:scaleX(0.9440);">Format all cells based on their values:</span>
<span class="t" style="left:1771.8px;top:1146.30px;font-size:21.40px;line-height:21.40px;color:#000;transform:scaleX(0.9305);">F<u>o</u>rmat Style:</span>
<div style="left:1909.3px;top:1139.2px;width:255.4px;height:37.2px;background:#fff;border:1.2px solid #adadad;"></div>
<div style="left:2129.4px;top:1141.4px;width:33.2px;height:33.3px;background:#e1e1e1;border:1.2px solid #adadad;"></div>
<svg style="left:2139.3px;top:1154.5px;" width="14.0" height="8.5" viewBox="0 0 14 8.5"><path d="M.8 .8L7 7L13.200 .8" fill="none" stroke="#444" stroke-width="1.400"/></svg>
<span class="t" style="left:1914.1px;top:1149.30px;font-size:21.40px;line-height:21.40px;color:#000;transform:scaleX(0.9225);">Icon Sets</span>
<div style="left:2183.0px;top:1140.4px;width:210.8px;height:49.3px;background:#e1e1e1;border:1.2px solid #adadad;"></div>
<span class="t" style="left:2201.0px;top:1157.30px;font-size:21.40px;line-height:21.40px;color:#000;transform:scaleX(0.9393);">Reverse Icon Or<u>d</u>er</span>
<span class="t" style="left:1771.8px;top:1206.30px;font-size:21.40px;line-height:21.40px;color:#000;transform:scaleX(0.9358);">I<u>c</u>on Style:</span>
<div style="left:1910.0px;top:1200.0px;width:253.8px;height:43.8px;background:#e1e1e1;border:1.2px solid #adadad;"></div>
<div style="left:2134.0px;top:1203.0px;width:1.0px;height:38.0px;background:#a0a0a0;"></div>
<svg style="left:2139.6px;top:1218.3px;" width="15.7" height="7.8" viewBox="0 0 15.7 7.8"><path d="M0 0H15.7L7.85 7.8Z" fill="#000"/></svg>
<svg style="left:1920.5px;top:1207.8px;" width="24.0" height="29.0" viewBox="0 0 24 29"><path d="M8 .5h8v13.500l7.500-6.500v8.500L12 28.500.5 16V7.500L8 14z" fill="#d9593d" stroke="#b5452c" stroke-width=".9" stroke-linejoin="round"/></svg>
<svg style="left:1958.5px;top:1209.8px;" width="29.0" height="24.0" viewBox="0 0 29 24"><path d="M.5 8v8h13.500l-6.500 7.500h8.500L28.500 12 16 .5H7.500L14 8z" fill="#ecc076" stroke="#c79b40" stroke-width=".9" stroke-linejoin="round"/></svg>
<svg style="left:2000.5px;top:1207.5px;" width="24.0" height="29.0" viewBox="0 0 24 29"><path d="M8 28.500h8V15l7.500 6.500V13L12 .5.5 13v8.500L8 15z" fill="#6aa68f" stroke="#4a8a73" stroke-width=".9" stroke-linejoin="round"/></svg>
<div style="left:2182.2px;top:1205.3px;width:25.4px;height:25.2px;background:#fff;border:2px solid #333;"></div>
<span class="t" style="left:2220.6px;top:1210.30px;font-size:21.40px;line-height:21.40px;color:#000;transform:scaleX(0.9588);">Show <u>I</u>con Only</span>
<span class="t" style="left:1771.8px;top:1259.30px;font-size:21.40px;line-height:21.40px;color:#000;transform:scaleX(0.9670);">Display each icon according to these rules:</span>
<span class="t" style="left:1771.8px;top:1296.30px;font-size:21.40px;line-height:21.40px;color:#000;font-weight:bold;transform:scaleX(0.9524);">Ico<u>n</u></span>
<span class="t" style="left:2288.4px;top:1296.30px;font-size:21.40px;line-height:21.40px;color:#000;font-weight:bold;transform:scaleX(0.9693);"><u>V</u>alue</span>
<span class="t" style="left:2549.0px;top:1296.30px;font-size:21.40px;line-height:21.40px;color:#000;font-weight:bold;transform:scaleX(0.9636);"><u>T</u>ype</span>
<div style="left:1771.3px;top:1328.2px;width:165.5px;height:43.4px;background:#e1e1e1;border:1.2px solid #adadad;"></div>
<div style="left:1907.5px;top:1331.2px;width:1.0px;height:37.5px;background:#a0a0a0;"></div>
<svg style="left:1912.9px;top:1345.9px;" width="15.3" height="7.8" viewBox="0 0 15.3 7.8"><path d="M0 0H15.3L7.65 7.8Z" fill="#000"/></svg>
<svg style="left:1829.0px;top:1335.8px;" width="24.0" height="29.0" viewBox="0 0 24 29"><path d="M8 28.500h8V15l7.500 6.500V13L12 .5.5 13v8.500L8 15z" fill="#6aa68f" stroke="#4a8a73" stroke-width=".9" stroke-linejoin="round"/></svg>
<span class="t" style="left:1956.2px;top:1342.30px;font-size:21.40px;line-height:21.40px;color:#000;transform:scaleX(0.9571);">when value is</span>
<div style="left:1771.3px;top:1382.2px;width:165.5px;height:43.4px;background:#e1e1e1;border:1.2px solid #adadad;"></div>
<div style="left:1907.5px;top:1385.2px;width:1.0px;height:37.5px;background:#a0a0a0;"></div>
<svg style="left:1912.9px;top:1399.9px;" width="15.3" height="7.8" viewBox="0 0 15.3 7.8"><path d="M0 0H15.3L7.65 7.8Z" fill="#000"/></svg>
<svg style="left:1826.5px;top:1392.2px;" width="29.0" height="24.0" viewBox="0 0 29 24"><path d="M.5 8v8h13.500l-6.500 7.500h8.500L28.500 12 16 .5H7.500L14 8z" fill="#ecc076" stroke="#c79b40" stroke-width=".9" stroke-linejoin="round"/></svg>
<span class="t" style="left:1956.2px;top:1396.30px;font-size:21.40px;line-height:21.40px;color:#000;transform:scaleX(0.9671);">when &lt; 20000 and</span>
<div style="left:1771.3px;top:1436.0px;width:165.5px;height:43.4px;background:#e1e1e1;border:1.2px solid #adadad;"></div>
<div style="left:1907.5px;top:1439.0px;width:1.0px;height:37.5px;background:#a0a0a0;"></div>
<svg style="left:1912.9px;top:1453.7px;" width="15.3" height="7.8" viewBox="0 0 15.3 7.8"><path d="M0 0H15.3L7.65 7.8Z" fill="#000"/></svg>
<svg style="left:1829.0px;top:1443.6px;" width="24.0" height="29.0" viewBox="0 0 24 29"><path d="M8 .5h8v13.500l7.500-6.500v8.500L12 28.500.5 16V7.500L8 14z" fill="#d9593d" stroke="#b5452c" stroke-width=".9" stroke-linejoin="round"/></svg>
<span class="t" style="left:1956.2px;top:1450.30px;font-size:21.40px;line-height:21.40px;color:#000;transform:scaleX(0.9880);">when &lt; 0</span>
<div style="left:2180.3px;top:1327.4px;width:89.6px;height:37.2px;background:#fff;border:1.2px solid #adadad;"></div>
<div style="left:2234.5px;top:1329.6px;width:33.2px;height:32.8px;background:#e1e1e1;border:1.2px solid #adadad;"></div>
<svg style="left:2244.2px;top:1342.9px;" width="14.0" height="8.5" viewBox="0 0 14 8.5"><path d="M.8 .8L7 7L13.200 .8" fill="none" stroke="#444" stroke-width="1.400"/></svg>
<span class="t" style="left:2186.0px;top:1336.30px;font-size:21.40px;line-height:21.40px;color:#000;transform:scaleX(0.9802);">&gt;=</span>
<div style="left:2287.0px;top:1327.4px;width:242.4px;height:37.2px;background:#fff;border:1.2px solid #adadad;"></div>
<span class="t" style="left:2291.3px;top:1337.30px;font-size:21.40px;line-height:21.40px;color:#000;transform:scaleX(0.9057);">20000</span>
<div style="left:2494.3px;top:1328.9px;width:34.2px;height:34.2px;background:#f2f2f2;border:1.2px solid #c4c4c4;"></div>
<svg style="left:2501.0px;top:1331.9px;" width="21.0" height="29.0" viewBox="0 0 21 29"><path d="M10.500 2.500v19.500M3.500 11L10.500 3l7 8" fill="none" stroke="#000" stroke-width="3.400"/><path d="M1 26.500h19" stroke="#000" stroke-width="1.300"/></svg>
<div style="left:2548.3px;top:1327.4px;width:152.6px;height:37.2px;background:#fff;border:1.2px solid #adadad;"></div>
<div style="left:2665.5px;top:1329.6px;width:33.2px;height:32.8px;background:#e1e1e1;border:1.2px solid #adadad;"></div>
<svg style="left:2675.2px;top:1342.9px;" width="14.0" height="8.5" viewBox="0 0 14 8.5"><path d="M.8 .8L7 7L13.200 .8" fill="none" stroke="#444" stroke-width="1.400"/></svg>
<span class="t" style="left:2553.0px;top:1337.30px;font-size:21.40px;line-height:21.40px;color:#000;transform:scaleX(0.9853);">Number</span>
<div style="left:2180.3px;top:1381.0px;width:89.6px;height:37.2px;background:#fff;border:1.2px solid #adadad;"></div>
<div style="left:2234.5px;top:1383.2px;width:33.2px;height:32.8px;background:#e1e1e1;border:1.2px solid #adadad;"></div>
<svg style="left:2244.2px;top:1396.5px;" width="14.0" height="8.5" viewBox="0 0 14 8.5"><path d="M.8 .8L7 7L13.200 .8" fill="none" stroke="#444" stroke-width="1.400"/></svg>
<span class="t" style="left:2186.0px;top:1390.30px;font-size:21.40px;line-height:21.40px;color:#000;transform:scaleX(0.9802);">&gt;=</span>
<div style="left:2287.0px;top:1381.0px;width:242.4px;height:37.2px;background:#fff;border:1.2px solid #adadad;"></div>
<span class="t" style="left:2291.3px;top:1391.30px;font-size:21.40px;line-height:21.40px;color:#000;transform:scaleX(0.9057);">10000</span>
<div style="left:2494.3px;top:1382.5px;width:34.2px;height:34.2px;background:#f2f2f2;border:1.2px solid #c4c4c4;"></div>
<svg style="left:2501.0px;top:1385.5px;" width="21.0" height="29.0" viewBox="0 0 21 29"><path d="M10.500 2.500v19.500M3.500 11L10.500 3l7 8" fill="none" stroke="#000" stroke-width="3.400"/><path d="M1 26.500h19" stroke="#000" stroke-width="1.300"/></svg>
<div style="left:2548.3px;top:1381.0px;width:152.6px;height:37.2px;background:#fff;border:1.2px solid #adadad;"></div>
<div style="left:2665.5px;top:1383.2px;width:33.2px;height:32.8px;background:#e1e1e1;border:1.2px solid #adadad;"></div>
<svg style="left:2675.2px;top:1396.5px;" width="14.0" height="8.5" viewBox="0 0 14 8.5"><path d="M.8 .8L7 7L13.200 .8" fill="none" stroke="#444" stroke-width="1.400"/></svg>
<span class="t" style="left:2553.0px;top:1391.30px;font-size:21.40px;line-height:21.40px;color:#000;transform:scaleX(0.9853);">Number</span>
<div style="left:2420.6px;top:1497.5px;width:134.8px;height:48.6px;background:#e1e1e1;border:2.2px solid #0078d7;"></div>
<span class="t" style="left:2474.6px;top:1514.30px;font-size:21.40px;line-height:21.40px;color:#000;transform:scaleX(0.8797);">OK</span>
<div style="left:2575.0px;top:1497.5px;width:135.7px;height:48.6px;background:#e1e1e1;border:1.2px solid #adadad;"></div>
<span class="t" style="left:2612.6px;top:1514.30px;font-size:21.40px;line-height:21.40px;color:#000;transform:scaleX(0.9112);">Cancel</span>
<div style="left:890.2px;top:714.4px;width:279.6px;height:108.2px;border:2.7px solid #e94b47;"></div>
<div style="left:1848.2px;top:389.5px;width:160.0px;height:178.5px;border:3px solid #e94b47;"></div>
<div style="left:1716.5px;top:695.0px;width:1077.7px;height:903.8px;border:3px solid #e94b47;"></div>
<div style="left:2155.3px;top:1287.3px;width:377.7px;height:167.4px;border:3px solid #e94b47;"></div>
<div style="left:2532.0px;top:1267.0px;width:211.0px;height:185.0px;border:3px solid #e94b47;"></div>
<svg style="left:0.0px;top:0.0px;pointer-events:none;" width="2851.0" height="1634.0" viewBox="0 0 2851 1634"><g style="filter:drop-shadow(-1px 3px 2.500px rgba(0,0,0,.45))"><path d="M1228.0 799.3L1811.0 496.2L1813.2 503.7L1833.0 475.8L1798.8 476.3L1803.7 482.4L1224.0 791.7A4.3 4.3 0 0 0 1228.0 799.3Z" fill="#e94b47"/><path d="M1812.9 538.9L1976.5 808.5L1969.1 811.3L1998.4 829.0L1995.5 794.9L1989.7 800.3L1820.3 534.3A4.3 4.3 0 0 0 1812.9 538.9Z" fill="#e94b47"/><path d="M2245.7 863.1L2542.8 1233.0L2535.9 1236.7L2567.2 1250.5L2559.9 1217.1L2554.9 1223.1L2252.3 857.7A4.3 4.3 0 0 0 2245.7 863.1Z" fill="#e94b47"/><path d="M2513.9 1233.3L2382.6 1268.2L2381.8 1260.1L2356.9 1283.5L2390.5 1289.8L2386.8 1282.6L2516.3 1241.5A4.3 4.3 0 0 0 2513.9 1233.3Z" fill="#e94b47"/></g></svg>
</div></body></html>
